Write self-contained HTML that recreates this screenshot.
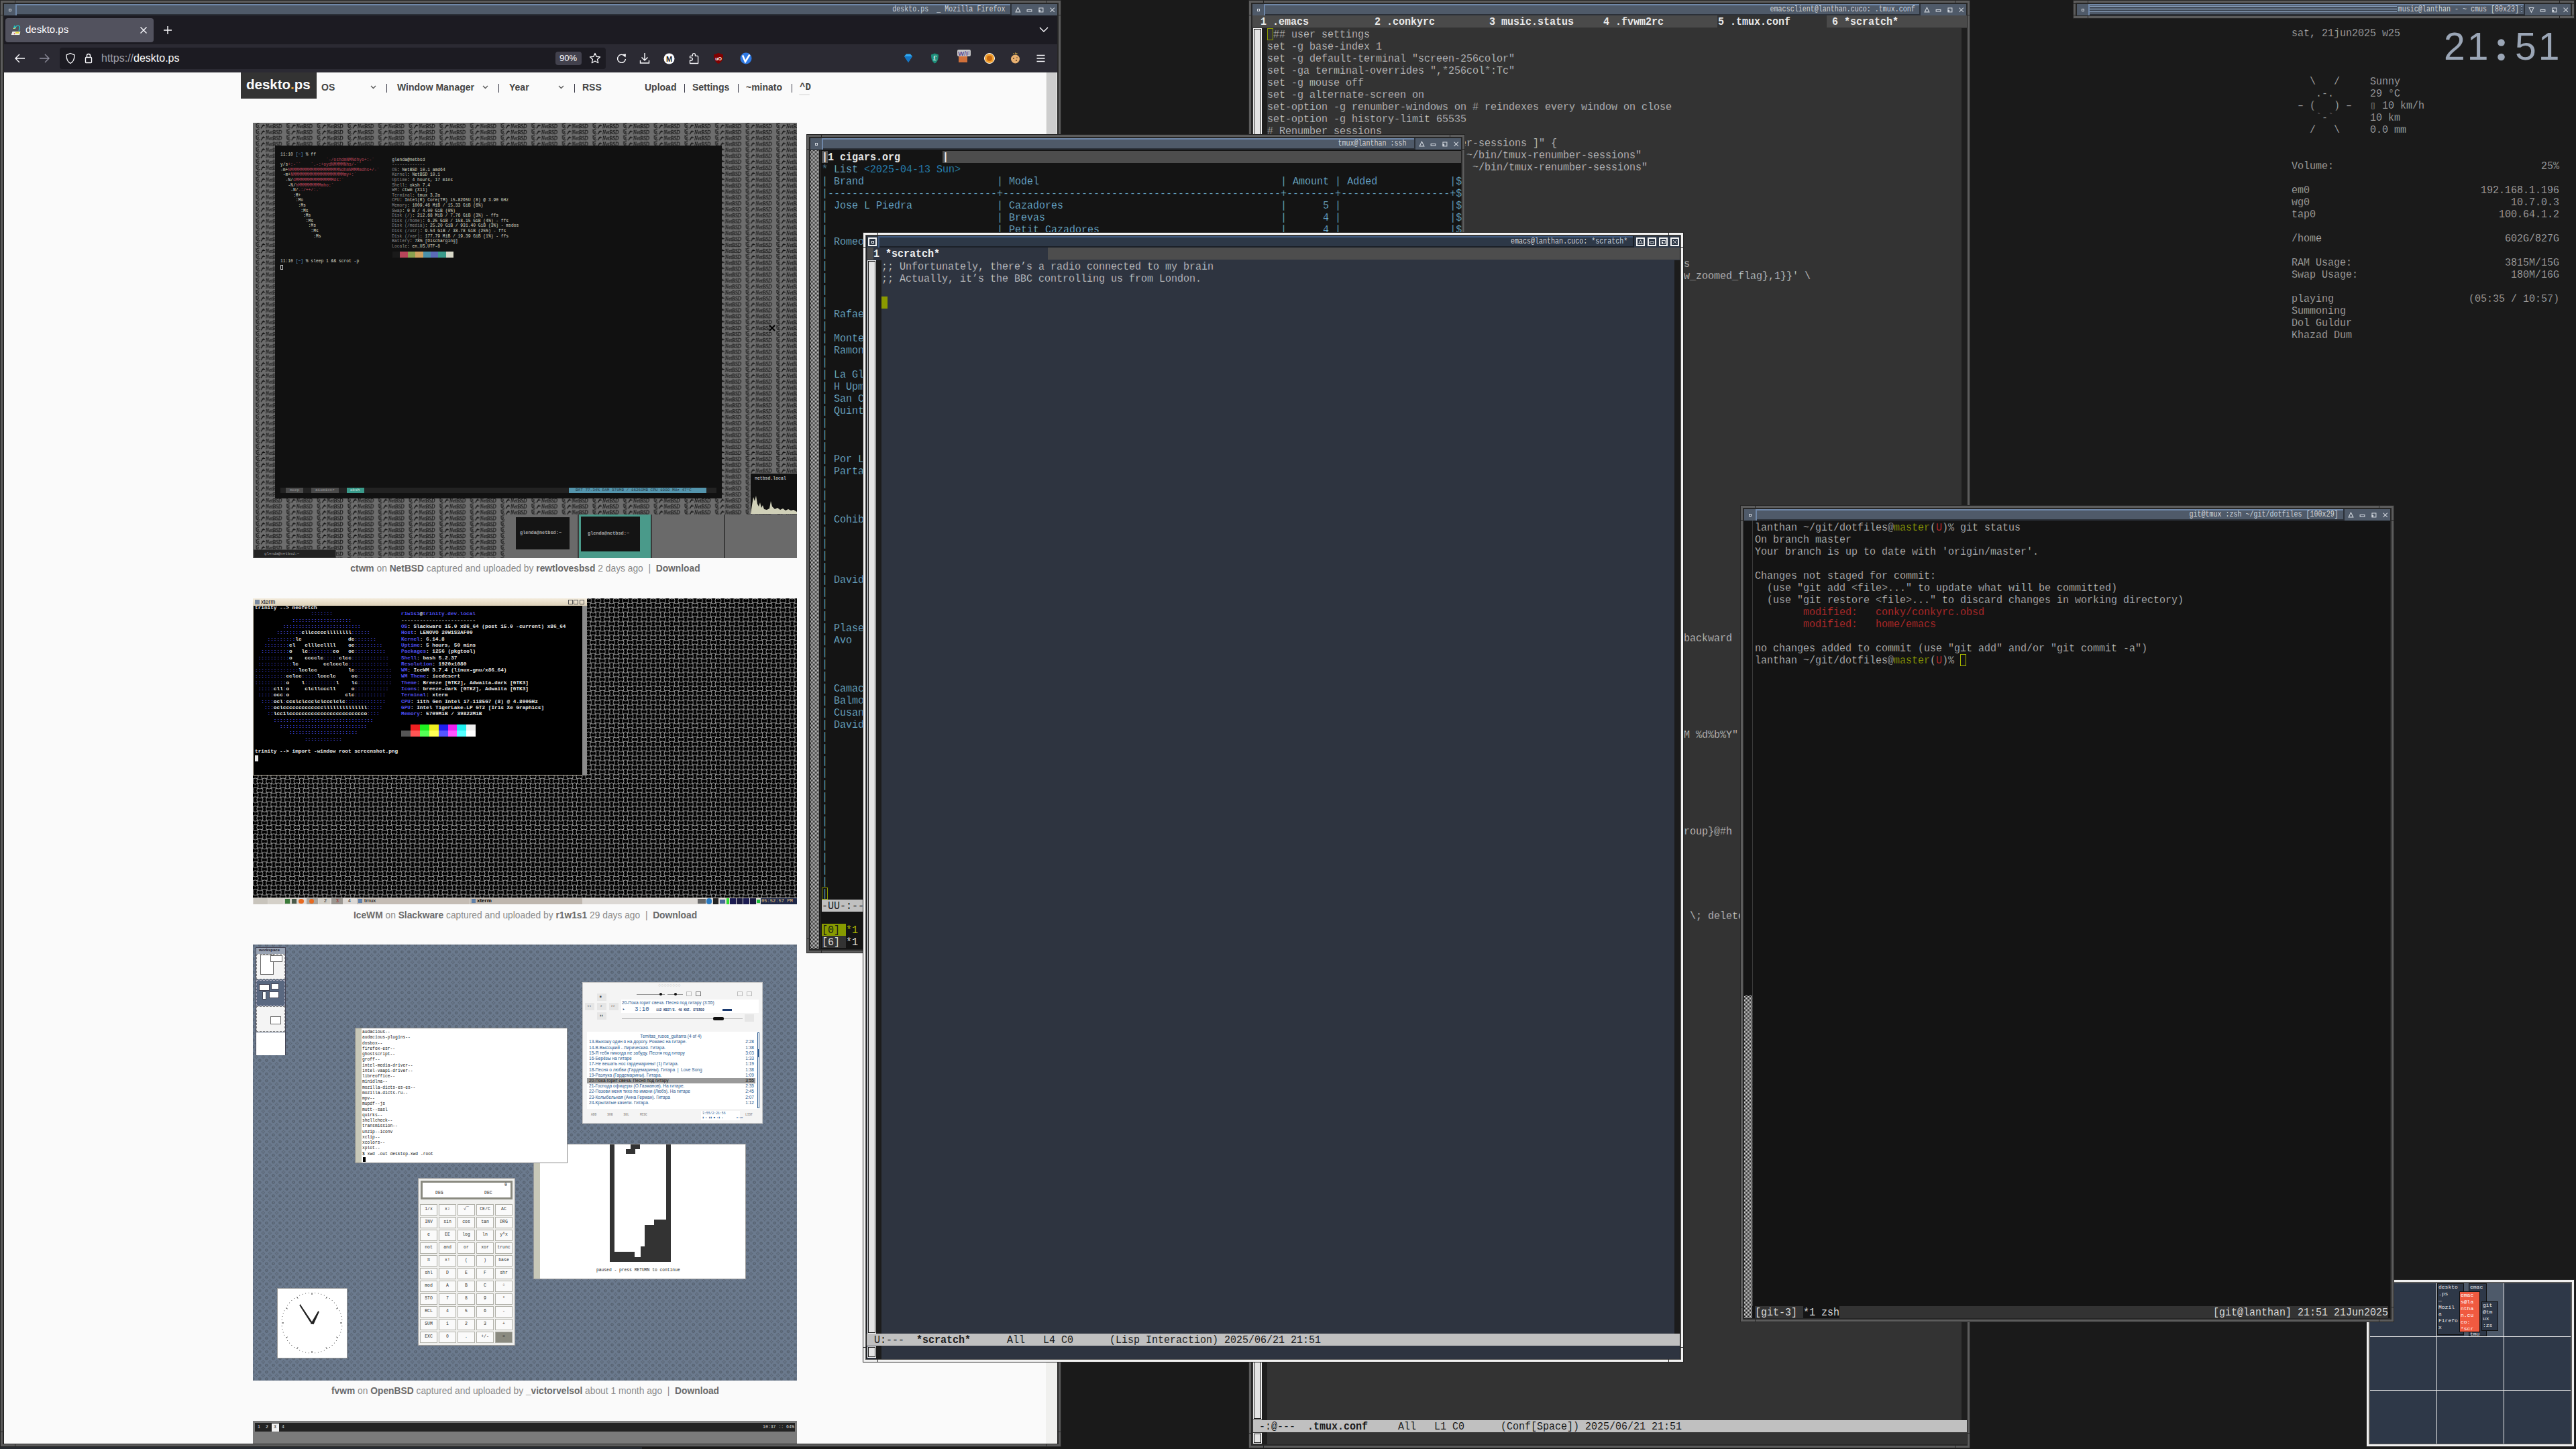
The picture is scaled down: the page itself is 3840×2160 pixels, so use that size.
<!DOCTYPE html><html><head><meta charset="utf-8"><style>
*{margin:0;padding:0;box-sizing:border-box}
html,body{width:3840px;height:2160px;overflow:hidden;background:#1a1a1a}
body{position:relative;font-family:"Liberation Sans",sans-serif}
div,svg{position:absolute}
.m{font-family:"Liberation Mono",monospace;font-size:16px;line-height:18px;white-space:pre;transform:scaleX(0.9375);transform-origin:0 0}
.wt{font-family:"Liberation Mono",monospace;font-size:13px;line-height:16px;white-space:pre;color:#d2d6dc;transform:scaleX(0.77);transform-origin:100% 0}
.ffui{font-family:"Liberation Sans",sans-serif;white-space:pre}
</style></head><body><div class="m" style="left:3416px;top:41px;color:#c8c8c8;-webkit-text-stroke:0.4px #1a1a1a">sat, 21jun2025 w25</div><div style="left:3643px;top:34px;font-family:'Liberation Sans',sans-serif;font-size:57px;line-height:70px;color:#9ba6b6;letter-spacing:3px;white-space:pre">21</div><svg style="left:3720px;top:55px" width="18" height="38"><circle cx="8.5" cy="8.5" r="5.3" fill="#9ba6b6"/><circle cx="8.5" cy="30" r="5.3" fill="#9ba6b6"/></svg><div style="left:3749px;top:34px;font-family:'Liberation Sans',sans-serif;font-size:57px;line-height:70px;color:#9ba6b6;letter-spacing:3px;white-space:pre">51</div><div class="m" style="left:3416px;top:113px;color:#c8c8c8;-webkit-text-stroke:0.4px #1a1a1a">   \   /     Sunny</div><div class="m" style="left:3416px;top:131px;color:#c8c8c8;-webkit-text-stroke:0.4px #1a1a1a">    .-.      29 °C</div><div class="m" style="left:3416px;top:149px;color:#c8c8c8;-webkit-text-stroke:0.4px #1a1a1a"> – (   ) –   ▯ 10 km/h</div><div class="m" style="left:3416px;top:167px;color:#c8c8c8;-webkit-text-stroke:0.4px #1a1a1a">    `-`      10 km</div><div class="m" style="left:3416px;top:185px;color:#c8c8c8;-webkit-text-stroke:0.4px #1a1a1a">   /   \     0.0 mm</div><div class="m" style="left:3416px;top:239px;color:#c8c8c8;-webkit-text-stroke:0.4px #1a1a1a">Volume:</div><div class="m" style="left:3788px;top:239px;color:#c8c8c8;-webkit-text-stroke:0.4px #1a1a1a">25%</div><div class="m" style="left:3416px;top:275px;color:#c8c8c8;-webkit-text-stroke:0.4px #1a1a1a">em0</div><div class="m" style="left:3698px;top:275px;color:#c8c8c8;-webkit-text-stroke:0.4px #1a1a1a">192.168.1.196</div><div class="m" style="left:3416px;top:293px;color:#c8c8c8;-webkit-text-stroke:0.4px #1a1a1a">wg0</div><div class="m" style="left:3743px;top:293px;color:#c8c8c8;-webkit-text-stroke:0.4px #1a1a1a">10.7.0.3</div><div class="m" style="left:3416px;top:311px;color:#c8c8c8;-webkit-text-stroke:0.4px #1a1a1a">tap0</div><div class="m" style="left:3725px;top:311px;color:#c8c8c8;-webkit-text-stroke:0.4px #1a1a1a">100.64.1.2</div><div class="m" style="left:3416px;top:347px;color:#c8c8c8;-webkit-text-stroke:0.4px #1a1a1a">/home</div><div class="m" style="left:3734px;top:347px;color:#c8c8c8;-webkit-text-stroke:0.4px #1a1a1a">602G/827G</div><div class="m" style="left:3416px;top:383px;color:#c8c8c8;-webkit-text-stroke:0.4px #1a1a1a">RAM Usage:</div><div class="m" style="left:3734px;top:383px;color:#c8c8c8;-webkit-text-stroke:0.4px #1a1a1a">3815M/15G</div><div class="m" style="left:3416px;top:401px;color:#c8c8c8;-webkit-text-stroke:0.4px #1a1a1a">Swap Usage:</div><div class="m" style="left:3743px;top:401px;color:#c8c8c8;-webkit-text-stroke:0.4px #1a1a1a">180M/16G</div><div class="m" style="left:3416px;top:437px;color:#c8c8c8;-webkit-text-stroke:0.4px #1a1a1a">playing</div><div class="m" style="left:3680px;top:437px;color:#c8c8c8;-webkit-text-stroke:0.4px #1a1a1a">(05:35 / 10:57)</div><div class="m" style="left:3416px;top:455px;color:#c8c8c8;-webkit-text-stroke:0.4px #1a1a1a">Summoning</div><div class="m" style="left:3416px;top:473px;color:#c8c8c8;-webkit-text-stroke:0.4px #1a1a1a">Dol Guldur</div><div class="m" style="left:3416px;top:491px;color:#c8c8c8;-webkit-text-stroke:0.4px #1a1a1a">Khazad Dum</div><div style="left:0px;top:2157px;width:957px;height:3px;background:#282c32;"></div><div style="left:0px;top:0px;width:1582px;height:2157px;background:#262626;"></div><div style="left:1px;top:1px;width:1580px;height:2155px;background:#5c5c5c;"></div><div style="left:4px;top:4px;width:1574px;height:2149px;background:#262626;"></div><div style="left:22px;top:0px;width:1px;height:6px;background:#262626;"></div><div style="left:0px;top:22px;width:6px;height:1px;background:#262626;"></div><div style="left:1559px;top:0px;width:1px;height:6px;background:#262626;"></div><div style="left:1576px;top:22px;width:6px;height:1px;background:#262626;"></div><div style="left:22px;top:2151px;width:1px;height:6px;background:#262626;"></div><div style="left:0px;top:2134px;width:6px;height:1px;background:#262626;"></div><div style="left:1559px;top:2151px;width:1px;height:6px;background:#262626;"></div><div style="left:1576px;top:2134px;width:6px;height:1px;background:#262626;"></div><div style="left:6px;top:6px;width:17px;height:17px;background:#4f5a69;"></div><div style="left:13px;top:13px;width:4px;height:4px;background:transparent;border:1px solid #d0d5dc"></div><div style="left:23px;top:6px;width:1483px;height:17px;background:#4f5a69;box-shadow:inset 2px 2px 0 #6f87a8, inset 0 -2px 0 #2b3038"></div><div style="left:1506px;top:6px;width:2px;height:17px;background:#2b3038;"></div><div class="wt" style="right:2342px;top:6px">deskto.ps  _ Mozilla Firefox</div><div style="left:1508px;top:6px;width:68px;height:17px;background:#4f5a69;"></div><svg style="left:1512px;top:9px" width="11" height="11" viewBox="0 0 13 13"><path d="M6.5 2.5 L2.5 10.5 L10.5 10.5 Z" fill="none" stroke="#d0d5dc" stroke-width="1.3"/></svg><svg style="left:1529px;top:9px" width="11" height="11" viewBox="0 0 13 13"><rect x="2.5" y="6.5" width="8" height="3" fill="none" stroke="#d0d5dc" stroke-width="1.3"/></svg><svg style="left:1546px;top:9px" width="11" height="11" viewBox="0 0 13 13"><rect x="3.5" y="3.5" width="7" height="7" fill="none" stroke="#d0d5dc" stroke-width="1.3"/><rect x="3" y="7" width="3" height="3" fill="#d0d5dc"/></svg><svg style="left:1563px;top:9px" width="11" height="11" viewBox="0 0 13 13"><path d="M3 3 L10.5 10.5 M10.5 3 L3 10.5" stroke="#d0d5dc" stroke-width="1.2"/></svg><div style="left:6px;top:23px;width:1570px;height:43px;background:#1c1b22;"></div><div style="left:8px;top:27px;width:221px;height:36px;background:#52525e;border-radius:4px"></div><svg style="left:15px;top:37px" width="17" height="17" viewBox="0 0 17 17"><path d="M3.2 9.6 L16 9.6 L14.6 15.6 L1 15.6 Z" fill="#ececec" stroke="#3a3a3a" stroke-width="0.7"/><rect x="8" y="10.6" width="5.5" height="2.4" fill="#e8e040"/><circle cx="6.5" cy="13.3" r="0.9" fill="#d03030"/><path d="M8.5 2.6 C11 0.6 14.5 1 14.5 4 L13.2 9" fill="none" stroke="#20c0c0" stroke-width="1.4"/><path d="M6.4 0.6 L9.4 4.6 L4.6 5.8 Z" fill="#20c0c0"/><path d="M5 5.6 L9 4.6" stroke="#f0f080" stroke-width="1"/></svg><div class="ffui" style="left:38px;top:34px;font-size:15px;line-height:20px;color:#fbfbfe">deskto.ps</div><svg style="left:208px;top:39px" width="12" height="12" viewBox="0 0 12 12"><path d="M1.5 1.5 L10.5 10.5 M10.5 1.5 L1.5 10.5" stroke="#fbfbfe" stroke-width="1.4"/></svg><svg style="left:243px;top:38px" width="14" height="14" viewBox="0 0 14 14"><path d="M7 1 V13 M1 7 H13" stroke="#fbfbfe" stroke-width="1.4"/></svg><svg style="left:1549px;top:40px" width="14" height="9" viewBox="0 0 14 9"><path d="M1 1 L7 7 L13 1" fill="none" stroke="#fbfbfe" stroke-width="1.4"/></svg><div style="left:6px;top:66px;width:1570px;height:42px;background:#2b2a33;"></div><div style="left:89px;top:71px;width:814px;height:32px;background:#1c1b22;border-radius:4px"></div><div class="ffui" style="left:151px;top:77px;font-size:16px;line-height:20px;color:#fbfbfe"><span style="color:#a0a0aa">https://</span>deskto.ps</div><div style="left:828px;top:77px;width:39px;height:20px;background:#42414d;border-radius:4px"></div><div class="ffui" style="left:834px;top:79px;font-size:13px;line-height:16px;color:#fbfbfe">90%</div><svg style="left:21px;top:79px" width="18" height="16" viewBox="0 0 18 16"><path d="M2 8 H16 M8 2 L2 8 L8 14" fill="none" stroke="#fbfbfe" stroke-width="1.4"/></svg><svg style="left:57px;top:79px" width="18" height="16" viewBox="0 0 18 16"><path d="M2 8 H16 M10 2 L16 8 L10 14" fill="none" stroke="#8f8f9d" stroke-width="1.4"/></svg><svg style="left:97px;top:78px" width="16" height="18" viewBox="0 0 16 18"><path d="M8 1.5 L14 4 C14 11 12 14.5 8 16.5 C4 14.5 2 11 2 4 Z" fill="none" stroke="#fbfbfe" stroke-width="1.3"/></svg><svg style="left:126px;top:78px" width="12" height="17" viewBox="0 0 12 17"><rect x="1.5" y="7.5" width="9" height="8" rx="1" fill="none" stroke="#fbfbfe" stroke-width="1.4"/><path d="M3.5 7.5 V5 a2.5 2.5 0 0 1 5 0 V7.5" fill="none" stroke="#fbfbfe" stroke-width="1.4"/></svg><svg style="left:878px;top:78px" width="18" height="18" viewBox="0 0 18 18"><path d="M9 1.5 L11.2 6.3 L16.5 6.9 L12.5 10.4 L13.7 15.7 L9 13 L4.3 15.7 L5.5 10.4 L1.5 6.9 L6.8 6.3 Z" fill="none" stroke="#fbfbfe" stroke-width="1.3" stroke-linejoin="round"/></svg><svg style="left:918px;top:79px" width="17" height="17" viewBox="0 0 17 17"><path d="M13.5 5 A6 6 0 1 0 14.5 9" fill="none" stroke="#fbfbfe" stroke-width="1.4"/><path d="M10 2 L15 1.5 L14.5 6.5 Z" fill="#fbfbfe"/></svg><svg style="left:953px;top:78px" width="16" height="18" viewBox="0 0 16 18"><path d="M8 1 V12 M3.5 7.5 L8 12 L12.5 7.5 M1.5 12 V16 H14.5 V12" fill="none" stroke="#fbfbfe" stroke-width="1.4"/></svg><svg style="left:989px;top:79px" width="17" height="17" viewBox="0 0 17 17"><circle cx="8.5" cy="8.5" r="8" fill="#fbfbfe"/><text x="8.5" y="12.6" font-family="Liberation Sans" font-weight="bold" font-size="11" text-anchor="middle" fill="#1c1b22">M</text></svg><svg style="left:1026px;top:78px" width="17" height="18" viewBox="0 0 17 18"><path d="M2.5 16.5 V12 H4.5 A1.9 1.9 0 0 0 4.5 8.2 H2.5 V6.5 Q2.5 5.3 3.7 5.3 H6.4 V3.6 A2 2 0 0 1 10.4 3.6 V5.3 H13.4 Q14.6 5.3 14.6 6.5 V16.5 Z" fill="none" stroke="#fbfbfe" stroke-width="1.3" stroke-linejoin="round"/></svg><svg style="left:1063px;top:78px" width="16" height="18" viewBox="0 0 16 18"><path d="M8 1 L15 3.5 C15 11 12.5 15 8 17 C3.5 15 1 11 1 3.5 Z" fill="#800000"/><text x="8" y="11.5" font-family="Liberation Sans" font-weight="bold" font-size="7" text-anchor="middle" fill="#fff">uO</text></svg><svg style="left:1103px;top:78px" width="18" height="18" viewBox="0 0 18 18"><circle cx="9" cy="9" r="8.5" fill="#2f7ae5"/><path d="M4 4.5 L8 14 L14.5 3.5" fill="none" stroke="#fff" stroke-width="2.6"/></svg><svg style="left:1347px;top:79px" width="14" height="15" viewBox="0 0 14 15"><path d="M1 5 L4 1.5 H10 L13 5 L7 14 Z" fill="#31a8f0"/><path d="M1 5 H13 L7 14 Z" fill="#1273c4"/></svg><svg style="left:1387px;top:79px" width="13" height="16" viewBox="0 0 13 16"><path d="M6.5 0.5 L12 2.5 C12 10 10 13.5 6.5 15.5 C3 13.5 1 10 1 2.5 Z" fill="#1e8f7a"/><text x="6.5" y="11" font-family="Liberation Serif" font-style="italic" font-weight="bold" font-size="10" text-anchor="middle" fill="#fff">£</text></svg><svg style="left:1427px;top:73px" width="21" height="21" viewBox="0 0 21 21"><rect x="0" y="1" width="20" height="10" rx="2" fill="#c8c8c8"/><text x="10" y="10" font-family="Liberation Sans" font-weight="bold" font-size="9.5" text-anchor="middle" fill="#5a4a90">W/F</text><rect x="2" y="11" width="13" height="9" fill="#d0703a"/></svg><svg style="left:1467px;top:79px" width="16" height="16" viewBox="0 0 16 16"><circle cx="8" cy="8" r="7.5" fill="#f0a030" stroke="#fff" stroke-width="1"/><circle cx="8" cy="8" r="4" fill="#c86a10"/></svg><svg style="left:1506px;top:78px" width="15" height="17" viewBox="0 0 15 17"><circle cx="7.5" cy="10" r="6.5" fill="#e8b070"/><circle cx="5" cy="9" r="1" fill="#5a3a20"/><circle cx="9" cy="12" r="1" fill="#5a3a20"/><circle cx="10" cy="8" r="0.8" fill="#5a3a20"/><path d="M5 1 L5.5 3 M7.5 0.5 V2.5 M10 1 L9.5 3" stroke="#f0c040" stroke-width="1"/></svg><svg style="left:1545px;top:81px" width="13" height="12" viewBox="0 0 13 12"><path d="M0.5 1.5 H12.5 M0.5 6 H12.5 M0.5 10.5 H12.5" stroke="#fbfbfe" stroke-width="1.3"/></svg><div style="left:6px;top:108px;width:1570px;height:2044px;background:#fafafa;"></div><div style="left:1559px;top:108px;width:17px;height:2044px;background:#f0f0ee;"></div><div style="left:1560px;top:108px;width:15px;height:330px;background:#cdcdcd;"></div><div style="left:359px;top:108px;width:113px;height:39px;background:#333333;"></div><div class="ffui" style="left:367px;top:113px;font-size:20.5px;line-height:26px;font-weight:bold;color:#fafafa">deskto<span style="color:#e9a43c">.</span>ps</div><div class="ffui" style="left:479px;top:121px;font-size:14px;line-height:18px;font-weight:bold;color:#454545;">OS</div><svg style="left:552px;top:127px" width="9" height="6" viewBox="0 0 9 6"><path d="M1 1 L4.5 4.5 L8 1" fill="none" stroke="#555" stroke-width="1.3"/></svg><div style="left:576px;top:125px;width:1px;height:13px;background:#3a3a48;"></div><div class="ffui" style="left:592px;top:121px;font-size:14px;line-height:18px;font-weight:bold;color:#454545;">Window Manager</div><svg style="left:719px;top:127px" width="9" height="6" viewBox="0 0 9 6"><path d="M1 1 L4.5 4.5 L8 1" fill="none" stroke="#555" stroke-width="1.3"/></svg><div style="left:743px;top:125px;width:1px;height:13px;background:#3a3a48;"></div><div class="ffui" style="left:759px;top:121px;font-size:14px;line-height:18px;font-weight:bold;color:#454545;">Year</div><svg style="left:832px;top:127px" width="9" height="6" viewBox="0 0 9 6"><path d="M1 1 L4.5 4.5 L8 1" fill="none" stroke="#555" stroke-width="1.3"/></svg><div style="left:856px;top:125px;width:1px;height:13px;background:#3a3a48;"></div><div class="ffui" style="left:868px;top:121px;font-size:14px;line-height:18px;font-weight:bold;color:#454545;">RSS</div><div class="ffui" style="left:961px;top:121px;font-size:14px;line-height:18px;font-weight:bold;color:#454545;">Upload</div><div style="left:1020px;top:125px;width:1px;height:13px;background:#3a3a48;"></div><div class="ffui" style="left:1032px;top:121px;font-size:14px;line-height:18px;font-weight:bold;color:#454545;">Settings</div><div style="left:1100px;top:125px;width:1px;height:13px;background:#3a3a48;"></div><div class="ffui" style="left:1112px;top:121px;font-size:14px;line-height:18px;font-weight:bold;color:#454545;">~minato</div><div style="left:1180px;top:125px;width:1px;height:13px;background:#3a3a48;"></div><div class="ffui" style="left:1192px;top:121px;font-size:14px;line-height:18px;font-weight:bold;color:#454545;font-family:'Liberation Mono',monospace;">^D</div><div style="left:1191px;top:140px;width:16px;height:2px;background:#e6e6e6;border-radius:1px"></div><div style="left:377px;top:183px;width:811px;height:649px;overflow:hidden"><svg style="left:0;top:0" width="811" height="649"><defs><pattern id="nb" x="3" y="0.1" width="45.65" height="8.855" patternUnits="userSpaceOnUse"><path d="M6.5 1.2 A3.4 3.4 0 1 0 7.2 7.2 M2.5 2.5 L1.2 1.5 M3.5 6.5 L5.5 5.2" fill="none" stroke="#1a1a1a" stroke-width="1.1"/><circle cx="4.8" cy="4.2" r="1.2" fill="#333"/><path d="M9 8.3 L13 2.5 M10.5 4.5 C11.5 3.3 13.5 5.5 15 4" fill="none" stroke="#0e0e0e" stroke-width="1.2"/><text x="16" y="7.4" font-family="Liberation Serif" font-style="italic" font-size="9" fill="#161616" stroke="#161616" stroke-width="0.3" textLength="24" lengthAdjust="spacingAndGlyphs">NetBSD</text></pattern></defs><rect width="811" height="649" fill="#6d6d6d"/><rect width="811" height="649" fill="url(#nb)"/></svg><div style="left:33px;top:34px;width:666px;height:526px;background:#111111;"></div><div style="left:41px;top:44px;font-family:'Liberation Mono',monospace;font-size:6.3px;line-height:7.59px;white-space:pre;color:#cfcfc0;"><span style="color:#dcdcc8;">11:10 </span><span style="color:#5a9ac8;">[~]</span><span style="color:#dcdcc8;"> % ff</span>
                  <span style="color:#b8455a;">`-/oshdmNMNdhyo+:-`</span>       <span style="color:#dcdcc8;">glenda</span><span style="color:#dcdcc8;">@</span><span style="color:#dcdcc8;">netbsd</span>
<span style="color:#dcdcc8;">y/s</span><span style="color:#b8455a;">+:-``    `.-:+oydNMMMMNhs/-``</span>            <span style="color:#8a8a8a;">-------------</span>
<span style="color:#dcdcc8;">-m+</span><span style="color:#b8455a;">NMMMMMMMMMMMMMMMMMMMNdhmNMMMmdhs+/-`</span>     <span style="color:#8a8a8a;">OS</span><span style="color:#dcdcc8;">: NetBSD 10.1 amd64</span>
 <span style="color:#dcdcc8;">-m+</span><span style="color:#b8455a;">NMMMMMMMMMMMMMMMMMMMMmy+:`</span>              <span style="color:#8a8a8a;">Kernel</span><span style="color:#dcdcc8;">: NetBSD 10.1</span>
  <span style="color:#dcdcc8;">-N/</span><span style="color:#b8455a;">dMMMMMMMMMMMMMMMds:`</span>                   <span style="color:#8a8a8a;">Uptime</span><span style="color:#dcdcc8;">: 4 hours, 17 mins</span>
   <span style="color:#dcdcc8;">-N/</span><span style="color:#b8455a;">hMMMMMMMMMmho:`</span>                       <span style="color:#8a8a8a;">Shell</span><span style="color:#dcdcc8;">: oksh 7.4</span>
    <span style="color:#dcdcc8;">-N/</span><span style="color:#b8455a;">-:/++/:.`</span>                            <span style="color:#8a8a8a;">WM</span><span style="color:#dcdcc8;">: ctwm (X11)</span>
     <span style="color:#dcdcc8;">:M+</span><span style="color:#b8455a;"></span>                                    <span style="color:#8a8a8a;">Terminal</span><span style="color:#dcdcc8;">: tmux 3.2a</span>
      <span style="color:#dcdcc8;">:Mo</span><span style="color:#b8455a;"></span>                                   <span style="color:#8a8a8a;">CPU</span><span style="color:#dcdcc8;">: Intel(R) Core(TM) i5-8265U (8) @ 3.90 GHz</span>
       <span style="color:#dcdcc8;">:Ms</span><span style="color:#b8455a;"></span>                                  <span style="color:#8a8a8a;">Memory</span><span style="color:#dcdcc8;">: 1009.46 MiB / 15.33 GiB (6%)</span>
        <span style="color:#dcdcc8;">:Ms</span><span style="color:#b8455a;"></span>                                 <span style="color:#8a8a8a;">Swap</span><span style="color:#dcdcc8;">: 0 B / 4.00 GiB (0%)</span>
         <span style="color:#dcdcc8;">:Ms</span><span style="color:#b8455a;"></span>                                <span style="color:#8a8a8a;">Disk (/)</span><span style="color:#dcdcc8;">: 212.68 MiB / 7.76 GiB (3%) - ffs</span>
          <span style="color:#dcdcc8;">:Ms</span><span style="color:#b8455a;"></span>                               <span style="color:#8a8a8a;">Disk (/home)</span><span style="color:#dcdcc8;">: 6.25 GiB / 158.15 GiB (4%) - ffs</span>
           <span style="color:#dcdcc8;">:Ms</span><span style="color:#b8455a;"></span>                              <span style="color:#8a8a8a;">Disk (/media)</span><span style="color:#dcdcc8;">: 25.20 GiB / 931.40 GiB (3%) - msdos</span>
            <span style="color:#dcdcc8;">:Ms</span><span style="color:#b8455a;"></span>                             <span style="color:#8a8a8a;">Disk (/usr)</span><span style="color:#dcdcc8;">: 9.54 GiB / 38.78 GiB (25%) - ffs</span>
             <span style="color:#dcdcc8;">:Ms</span><span style="color:#b8455a;"></span>                            <span style="color:#8a8a8a;">Disk (/var)</span><span style="color:#dcdcc8;">: 177.79 MiB / 19.39 GiB (1%) - ffs</span>
                                            <span style="color:#8a8a8a;">Battery</span><span style="color:#dcdcc8;">: 78% [Discharging]</span>
                                            <span style="color:#8a8a8a;">Locale</span><span style="color:#dcdcc8;">: en_US.UTF-8</span>
                                            </div><div style="left:208.0px;top:192px;width:11.4px;height:9px;background:#1a1a1a;"></div><div style="left:219.4px;top:192px;width:11.4px;height:9px;background:#b8455a;"></div><div style="left:230.8px;top:192px;width:11.4px;height:9px;background:#8aa050;"></div><div style="left:242.2px;top:192px;width:11.4px;height:9px;background:#d0a060;"></div><div style="left:253.6px;top:192px;width:11.4px;height:9px;background:#4a90a8;"></div><div style="left:265.0px;top:192px;width:11.4px;height:9px;background:#5a6ab8;"></div><div style="left:276.4px;top:192px;width:11.4px;height:9px;background:#3a9a8a;"></div><div style="left:287.8px;top:192px;width:11.4px;height:9px;background:#d8d8c8;"></div><div style="left:41px;top:203.39px;font-family:'Liberation Mono',monospace;font-size:6.3px;line-height:7.59px;white-space:pre;color:#cfcfc0;"><span style="color:#dcdcc8;">11:10 </span><span style="color:#5a9ac8;">[~]</span><span style="color:#dcdcc8;"> % sleep 1 &amp;&amp; scrot -p</span></div><div style="left:41px;top:212px;width:4px;height:7px;background:transparent;border:1px solid #ccc"></div><div style="left:41px;top:544px;width:650px;height:8px;background:#222222;"></div><div style="left:49px;top:544px;width:26px;height:8px;background:#4a4a4a;"></div><div style="left:55px;top:543px;font-family:'Liberation Mono',monospace;font-size:6px;line-height:9px;white-space:pre;color:#9a9a9a;">mocp</div><div style="left:87px;top:544px;width:41px;height:8px;background:#4a4a4a;"></div><div style="left:93px;top:543px;font-family:'Liberation Mono',monospace;font-size:6px;line-height:9px;white-space:pre;color:#9a9a9a;">aiomixer</div><div style="left:140px;top:544px;width:26px;height:8px;background:#3a9a8a;"></div><div style="left:145px;top:543px;font-family:'Liberation Mono',monospace;font-size:6px;line-height:9px;white-space:pre;color:#d8f0e8;">oksh</div><div style="left:471px;top:544px;width:205px;height:8px;background:#5495ad;"></div><div style="left:481px;top:543px;font-family:'Liberation Mono',monospace;font-size:6px;line-height:9px;white-space:pre;color:#1e3440;">BAT 77.34% RAM 978MB / 16260MB CPU 1000 MHz 47°C</div><div style="left:742px;top:523px;width:69px;height:60px;background:#111111;"></div><div style="left:748px;top:526px;font-family:'Liberation Mono',monospace;font-size:6.5px;line-height:9px;white-space:pre;color:#e8e8e8;">netbsd.local</div><svg style="left:742px;top:550px" width="69" height="33" viewBox="0 0 69 33"><path d="M0 33 L2 20 L4 8 L6 14 L8 6 L10 18 L12 22 L14 16 L16 24 L18 20 L20 26 L24 27 L28 25 L30 14 L32 22 L36 26 L40 24 L44 27 L48 25 L52 28 L56 26 L60 28 L64 27 L69 30 L69 33 Z" fill="#d0d0b8"/></svg><div style="left:376px;top:584px;width:435px;height:65px;background:#6a6a6a;"></div><div style="left:484px;top:584px;width:2px;height:65px;background:#3a3a3a;"></div><div style="left:593px;top:584px;width:2px;height:65px;background:#3a3a3a;"></div><div style="left:702px;top:584px;width:2px;height:65px;background:#3a3a3a;"></div><div style="left:486px;top:584px;width:107px;height:65px;background:#4a9a8a;"></div><div style="left:392px;top:588px;width:80px;height:48px;background:#141414;"></div><div style="left:489px;top:587px;width:88px;height:52px;background:#141414;"></div><div style="left:398px;top:606px;font-family:'Liberation Mono',monospace;font-size:6.9px;line-height:10px;white-space:pre;color:#a8a8a8;font-weight:bold">glenda@netbsd:~</div><div style="left:499px;top:607px;font-family:'Liberation Mono',monospace;font-size:6.9px;line-height:10px;white-space:pre;color:#a8a8a8;font-weight:bold">glenda@netbsd:~</div><div style="left:1px;top:636px;width:123px;height:13px;background:#222222;border:1px solid #444"></div><div style="left:17px;top:638px;font-family:'Liberation Mono',monospace;font-size:5.8px;line-height:9px;white-space:pre;color:#a0a0a0;">glenda@netbsd:~</div><svg style="left:768px;top:300px" width="12" height="12" viewBox="0 0 12 12"><path d="M2 2 L10 10 M10 2 L2 10" stroke="#000" stroke-width="2"/></svg></div><div class="ffui" style="left:283px;width:1000px;top:838px;text-align:center;font-size:13.8px;line-height:20px;color:#8a8a8a"><b style="color:#6a6a6a">ctwm</b> on <b style="color:#6a6a6a">NetBSD</b> captured and uploaded by <b style="color:#6a6a6a">rewtlovesbsd</b> 2 days ago &nbsp;|&nbsp; <b style="color:#6a6a6a">Download</b></div><div style="left:377px;top:892px;width:811px;height:456px;overflow:hidden;background:#000"><svg style="left:0;top:0" width="811" height="456"><defs><pattern id="wv" width="13.8" height="13.8" patternUnits="userSpaceOnUse"><path d="M0.00 0.00 Q3.45 2.20 6.90 0.00 M6.90 0.00 Q10.35 -2.20 13.80 0.00 M0.00 6.90 Q3.45 4.70 6.90 6.90 M6.90 6.90 Q10.35 9.10 13.80 6.90 M0.00 13.80 Q3.45 16.00 6.90 13.80 M6.90 13.80 Q10.35 11.60 13.80 13.80 M0.00 0.00 Q-2.20 3.45 0.00 6.90 M0.00 6.90 Q2.20 10.35 0.00 13.80 M6.90 0.00 Q9.10 3.45 6.90 6.90 M6.90 6.90 Q4.70 10.35 6.90 13.80 M13.80 0.00 Q11.60 3.45 13.80 6.90 M13.80 6.90 Q16.00 10.35 13.80 13.80" fill="none" stroke="#c4c4c4" stroke-width="0.85"/></pattern></defs><rect width="811" height="456" fill="url(#wv)"/></svg><div style="left:0px;top:0px;width:498px;height:264px;background:#000000;border:1px solid #c8c0b0"></div><div style="left:0px;top:0px;width:498px;height:11px;background:linear-gradient(#f4ecdc,#dcd0b8);"></div><div style="left:3px;top:2px;width:7px;height:7px;background:#7a8aa0;"></div><div style="left:12px;top:0px;font-family:'Liberation Mono',monospace;font-size:8.5px;line-height:11px;white-space:pre;color:#000;font-family:'Liberation Sans',sans-serif">xterm</div><div style="left:470px;top:2px;width:7px;height:7px;background:transparent;border:1px solid #555"></div><div style="left:478px;top:2px;width:7px;height:7px;background:transparent;border:1px solid #555"></div><div style="left:487px;top:2px;width:7px;height:7px;background:transparent;border:1px solid #555"></div><div style="left:491px;top:11px;width:7px;height:253px;background:#8a8a8a;"></div><div style="left:3px;top:10px;font-family:'Liberation Mono',monospace;font-size:7.73px;line-height:9.31px;white-space:pre;color:#e8e8e8;font-weight:bold"><span style="color:#e8e8e8;">trinity --&gt; neofetch</span>
                  <span style="color:#5050f0;">:</span><span style="color:#5050f0;">:</span><span style="color:#5050f0;">:</span><span style="color:#5050f0;">:</span><span style="color:#5050f0;">:</span><span style="color:#5050f0;">:</span><span style="color:#5050f0;">:</span>                      <span style="color:#5050f0;">r1w1s1</span><span style="color:#e8e8e8;">@</span><span style="color:#5050f0;">trinity.dev.local</span>
            <span style="color:#5050f0;">:</span><span style="color:#5050f0;">:</span><span style="color:#5050f0;">:</span><span style="color:#5050f0;">:</span><span style="color:#5050f0;">:</span><span style="color:#5050f0;">:</span><span style="color:#5050f0;">:</span><span style="color:#5050f0;">:</span><span style="color:#5050f0;">:</span><span style="color:#5050f0;">:</span><span style="color:#5050f0;">:</span><span style="color:#5050f0;">:</span><span style="color:#5050f0;">:</span><span style="color:#5050f0;">:</span><span style="color:#5050f0;">:</span><span style="color:#5050f0;">:</span><span style="color:#5050f0;">:</span><span style="color:#5050f0;">:</span><span style="color:#5050f0;">:</span>                <span style="color:#e8e8e8;">------------------------</span>
         <span style="color:#5050f0;">:</span><span style="color:#5050f0;">:</span><span style="color:#5050f0;">:</span><span style="color:#5050f0;">:</span><span style="color:#5050f0;">:</span><span style="color:#5050f0;">:</span><span style="color:#5050f0;">:</span><span style="color:#5050f0;">:</span><span style="color:#5050f0;">:</span><span style="color:#5050f0;">:</span><span style="color:#5050f0;">:</span><span style="color:#5050f0;">:</span><span style="color:#5050f0;">:</span><span style="color:#5050f0;">:</span><span style="color:#5050f0;">:</span><span style="color:#5050f0;">:</span><span style="color:#5050f0;">:</span><span style="color:#5050f0;">:</span><span style="color:#5050f0;">:</span><span style="color:#5050f0;">:</span><span style="color:#5050f0;">:</span><span style="color:#5050f0;">:</span><span style="color:#5050f0;">:</span><span style="color:#5050f0;">:</span><span style="color:#5050f0;">:</span>             <span style="color:#5050f0;">OS</span><span style="color:#e8e8e8;">: Slackware 15.0 x86_64 (post 15.0 -current) x86_64</span>
       <span style="color:#5050f0;">:</span><span style="color:#5050f0;">:</span><span style="color:#5050f0;">:</span><span style="color:#5050f0;">:</span><span style="color:#5050f0;">:</span><span style="color:#5050f0;">:</span><span style="color:#5050f0;">:</span><span style="color:#5050f0;">:</span><span style="color:#e8e8e8;">c</span><span style="color:#e8e8e8;">l</span><span style="color:#e8e8e8;">l</span><span style="color:#e8e8e8;">c</span><span style="color:#e8e8e8;">c</span><span style="color:#e8e8e8;">c</span><span style="color:#e8e8e8;">c</span><span style="color:#e8e8e8;">c</span><span style="color:#e8e8e8;">l</span><span style="color:#e8e8e8;">l</span><span style="color:#e8e8e8;">l</span><span style="color:#e8e8e8;">l</span><span style="color:#e8e8e8;">l</span><span style="color:#e8e8e8;">l</span><span style="color:#e8e8e8;">l</span><span style="color:#e8e8e8;">l</span><span style="color:#5050f0;">:</span><span style="color:#5050f0;">:</span><span style="color:#5050f0;">:</span><span style="color:#5050f0;">:</span><span style="color:#5050f0;">:</span><span style="color:#5050f0;">:</span>          <span style="color:#5050f0;">Host</span><span style="color:#e8e8e8;">: LENOVO 20W1S3AF00</span>
    <span style="color:#5050f0;">:</span><span style="color:#5050f0;">:</span><span style="color:#5050f0;">:</span><span style="color:#5050f0;">:</span><span style="color:#5050f0;">:</span><span style="color:#5050f0;">:</span><span style="color:#5050f0;">:</span><span style="color:#5050f0;">:</span><span style="color:#5050f0;">:</span><span style="color:#e8e8e8;">l</span><span style="color:#e8e8e8;">c</span>               <span style="color:#e8e8e8;">d</span><span style="color:#e8e8e8;">c</span><span style="color:#5050f0;">:</span><span style="color:#5050f0;">:</span><span style="color:#5050f0;">:</span><span style="color:#5050f0;">:</span><span style="color:#5050f0;">:</span><span style="color:#5050f0;">:</span><span style="color:#5050f0;">:</span>        <span style="color:#5050f0;">Kernel</span><span style="color:#e8e8e8;">: 6.14.8</span>
   <span style="color:#5050f0;">:</span><span style="color:#5050f0;">:</span><span style="color:#5050f0;">:</span><span style="color:#5050f0;">:</span><span style="color:#5050f0;">:</span><span style="color:#5050f0;">:</span><span style="color:#5050f0;">:</span><span style="color:#5050f0;">:</span><span style="color:#e8e8e8;">c</span><span style="color:#e8e8e8;">l</span>   <span style="color:#e8e8e8;">c</span><span style="color:#e8e8e8;">l</span><span style="color:#e8e8e8;">l</span><span style="color:#e8e8e8;">l</span><span style="color:#e8e8e8;">c</span><span style="color:#e8e8e8;">c</span><span style="color:#e8e8e8;">l</span><span style="color:#e8e8e8;">l</span><span style="color:#e8e8e8;">l</span><span style="color:#e8e8e8;">l</span>    <span style="color:#e8e8e8;">o</span><span style="color:#e8e8e8;">c</span><span style="color:#5050f0;">:</span><span style="color:#5050f0;">:</span><span style="color:#5050f0;">:</span><span style="color:#5050f0;">:</span><span style="color:#5050f0;">:</span><span style="color:#5050f0;">:</span><span style="color:#5050f0;">:</span><span style="color:#5050f0;">:</span><span style="color:#5050f0;">:</span>      <span style="color:#5050f0;">Uptime</span><span style="color:#e8e8e8;">: 5 hours, 50 mins</span>
  <span style="color:#5050f0;">:</span><span style="color:#5050f0;">:</span><span style="color:#5050f0;">:</span><span style="color:#5050f0;">:</span><span style="color:#5050f0;">:</span><span style="color:#5050f0;">:</span><span style="color:#5050f0;">:</span><span style="color:#5050f0;">:</span><span style="color:#5050f0;">:</span><span style="color:#e8e8e8;">o</span>   <span style="color:#e8e8e8;">l</span><span style="color:#e8e8e8;">c</span><span style="color:#5050f0;">:</span><span style="color:#5050f0;">:</span><span style="color:#5050f0;">:</span><span style="color:#5050f0;">:</span><span style="color:#5050f0;">:</span><span style="color:#5050f0;">:</span><span style="color:#5050f0;">:</span><span style="color:#5050f0;">:</span><span style="color:#e8e8e8;">c</span><span style="color:#e8e8e8;">o</span>   <span style="color:#e8e8e8;">o</span><span style="color:#e8e8e8;">c</span><span style="color:#5050f0;">:</span><span style="color:#5050f0;">:</span><span style="color:#5050f0;">:</span><span style="color:#5050f0;">:</span><span style="color:#5050f0;">:</span><span style="color:#5050f0;">:</span><span style="color:#5050f0;">:</span><span style="color:#5050f0;">:</span><span style="color:#5050f0;">:</span><span style="color:#5050f0;">:</span>     <span style="color:#5050f0;">Packages</span><span style="color:#e8e8e8;">: 1256 (pkgtool)</span>
 <span style="color:#5050f0;">:</span><span style="color:#5050f0;">:</span><span style="color:#5050f0;">:</span><span style="color:#5050f0;">:</span><span style="color:#5050f0;">:</span><span style="color:#5050f0;">:</span><span style="color:#5050f0;">:</span><span style="color:#5050f0;">:</span><span style="color:#5050f0;">:</span><span style="color:#5050f0;">:</span><span style="color:#e8e8e8;">o</span>    <span style="color:#e8e8e8;">c</span><span style="color:#e8e8e8;">c</span><span style="color:#e8e8e8;">c</span><span style="color:#e8e8e8;">c</span><span style="color:#e8e8e8;">l</span><span style="color:#e8e8e8;">c</span><span style="color:#5050f0;">:</span><span style="color:#5050f0;">:</span><span style="color:#5050f0;">:</span><span style="color:#5050f0;">:</span><span style="color:#5050f0;">:</span><span style="color:#e8e8e8;">c</span><span style="color:#e8e8e8;">l</span><span style="color:#e8e8e8;">c</span><span style="color:#e8e8e8;">c</span><span style="color:#5050f0;">:</span><span style="color:#5050f0;">:</span><span style="color:#5050f0;">:</span><span style="color:#5050f0;">:</span><span style="color:#5050f0;">:</span><span style="color:#5050f0;">:</span><span style="color:#5050f0;">:</span><span style="color:#5050f0;">:</span><span style="color:#5050f0;">:</span><span style="color:#5050f0;">:</span><span style="color:#5050f0;">:</span><span style="color:#5050f0;">:</span>    <span style="color:#5050f0;">Shell</span><span style="color:#e8e8e8;">: bash 5.2.37</span>
 <span style="color:#5050f0;">:</span><span style="color:#5050f0;">:</span><span style="color:#5050f0;">:</span><span style="color:#5050f0;">:</span><span style="color:#5050f0;">:</span><span style="color:#5050f0;">:</span><span style="color:#5050f0;">:</span><span style="color:#5050f0;">:</span><span style="color:#5050f0;">:</span><span style="color:#5050f0;">:</span><span style="color:#5050f0;">:</span><span style="color:#e8e8e8;">l</span><span style="color:#e8e8e8;">c</span>        <span style="color:#e8e8e8;">c</span><span style="color:#e8e8e8;">c</span><span style="color:#e8e8e8;">l</span><span style="color:#e8e8e8;">c</span><span style="color:#e8e8e8;">c</span><span style="color:#e8e8e8;">c</span><span style="color:#e8e8e8;">l</span><span style="color:#e8e8e8;">c</span><span style="color:#5050f0;">:</span><span style="color:#5050f0;">:</span><span style="color:#5050f0;">:</span><span style="color:#5050f0;">:</span><span style="color:#5050f0;">:</span><span style="color:#5050f0;">:</span><span style="color:#5050f0;">:</span><span style="color:#5050f0;">:</span><span style="color:#5050f0;">:</span><span style="color:#5050f0;">:</span><span style="color:#5050f0;">:</span><span style="color:#5050f0;">:</span><span style="color:#5050f0;">:</span>    <span style="color:#5050f0;">Resolution</span><span style="color:#e8e8e8;">: 1920x1080</span>
<span style="color:#5050f0;">:</span><span style="color:#5050f0;">:</span><span style="color:#5050f0;">:</span><span style="color:#5050f0;">:</span><span style="color:#5050f0;">:</span><span style="color:#5050f0;">:</span><span style="color:#5050f0;">:</span><span style="color:#5050f0;">:</span><span style="color:#5050f0;">:</span><span style="color:#5050f0;">:</span><span style="color:#5050f0;">:</span><span style="color:#5050f0;">:</span><span style="color:#5050f0;">:</span><span style="color:#5050f0;">:</span><span style="color:#e8e8e8;">l</span><span style="color:#e8e8e8;">c</span><span style="color:#e8e8e8;">c</span><span style="color:#e8e8e8;">l</span><span style="color:#e8e8e8;">c</span><span style="color:#e8e8e8;">c</span>          <span style="color:#e8e8e8;">l</span><span style="color:#e8e8e8;">c</span><span style="color:#5050f0;">:</span><span style="color:#5050f0;">:</span><span style="color:#5050f0;">:</span><span style="color:#5050f0;">:</span><span style="color:#5050f0;">:</span><span style="color:#5050f0;">:</span><span style="color:#5050f0;">:</span><span style="color:#5050f0;">:</span><span style="color:#5050f0;">:</span><span style="color:#5050f0;">:</span><span style="color:#5050f0;">:</span><span style="color:#5050f0;">:</span>   <span style="color:#5050f0;">WM</span><span style="color:#e8e8e8;">: IceWM 3.7.4 (linux-gnu/x86_64)</span>
<span style="color:#5050f0;">:</span><span style="color:#5050f0;">:</span><span style="color:#5050f0;">:</span><span style="color:#5050f0;">:</span><span style="color:#5050f0;">:</span><span style="color:#5050f0;">:</span><span style="color:#5050f0;">:</span><span style="color:#5050f0;">:</span><span style="color:#5050f0;">:</span><span style="color:#5050f0;">:</span><span style="color:#e8e8e8;">c</span><span style="color:#e8e8e8;">c</span><span style="color:#e8e8e8;">l</span><span style="color:#e8e8e8;">c</span><span style="color:#e8e8e8;">c</span><span style="color:#5050f0;">:</span><span style="color:#5050f0;">:</span><span style="color:#5050f0;">:</span><span style="color:#5050f0;">:</span><span style="color:#5050f0;">:</span><span style="color:#e8e8e8;">l</span><span style="color:#e8e8e8;">c</span><span style="color:#e8e8e8;">c</span><span style="color:#e8e8e8;">c</span><span style="color:#e8e8e8;">l</span><span style="color:#e8e8e8;">c</span>     <span style="color:#e8e8e8;">o</span><span style="color:#e8e8e8;">c</span><span style="color:#5050f0;">:</span><span style="color:#5050f0;">:</span><span style="color:#5050f0;">:</span><span style="color:#5050f0;">:</span><span style="color:#5050f0;">:</span><span style="color:#5050f0;">:</span><span style="color:#5050f0;">:</span><span style="color:#5050f0;">:</span><span style="color:#5050f0;">:</span><span style="color:#5050f0;">:</span><span style="color:#5050f0;">:</span>   <span style="color:#5050f0;">WM Theme</span><span style="color:#e8e8e8;">: icedesert</span>
<span style="color:#5050f0;">:</span><span style="color:#5050f0;">:</span><span style="color:#5050f0;">:</span><span style="color:#5050f0;">:</span><span style="color:#5050f0;">:</span><span style="color:#5050f0;">:</span><span style="color:#5050f0;">:</span><span style="color:#5050f0;">:</span><span style="color:#5050f0;">:</span><span style="color:#5050f0;">:</span><span style="color:#e8e8e8;">o</span>    <span style="color:#e8e8e8;">l</span><span style="color:#5050f0;">:</span><span style="color:#5050f0;">:</span><span style="color:#5050f0;">:</span><span style="color:#5050f0;">:</span><span style="color:#5050f0;">:</span><span style="color:#5050f0;">:</span><span style="color:#5050f0;">:</span><span style="color:#5050f0;">:</span><span style="color:#5050f0;">:</span><span style="color:#5050f0;">:</span><span style="color:#e8e8e8;">l</span>    <span style="color:#e8e8e8;">l</span><span style="color:#e8e8e8;">c</span><span style="color:#5050f0;">:</span><span style="color:#5050f0;">:</span><span style="color:#5050f0;">:</span><span style="color:#5050f0;">:</span><span style="color:#5050f0;">:</span><span style="color:#5050f0;">:</span><span style="color:#5050f0;">:</span><span style="color:#5050f0;">:</span><span style="color:#5050f0;">:</span><span style="color:#5050f0;">:</span><span style="color:#5050f0;">:</span>   <span style="color:#5050f0;">Theme</span><span style="color:#e8e8e8;">: Breeze [GTK2], Adwaita-dark [GTK3]</span>
 <span style="color:#5050f0;">:</span><span style="color:#5050f0;">:</span><span style="color:#5050f0;">:</span><span style="color:#5050f0;">:</span><span style="color:#5050f0;">:</span><span style="color:#e8e8e8;">c</span><span style="color:#e8e8e8;">l</span><span style="color:#e8e8e8;">l</span><span style="color:#5050f0;">:</span><span style="color:#e8e8e8;">o</span>     <span style="color:#e8e8e8;">c</span><span style="color:#e8e8e8;">l</span><span style="color:#e8e8e8;">c</span><span style="color:#e8e8e8;">l</span><span style="color:#e8e8e8;">l</span><span style="color:#e8e8e8;">c</span><span style="color:#e8e8e8;">c</span><span style="color:#e8e8e8;">c</span><span style="color:#e8e8e8;">l</span><span style="color:#e8e8e8;">l</span>     <span style="color:#e8e8e8;">o</span><span style="color:#5050f0;">:</span><span style="color:#5050f0;">:</span><span style="color:#5050f0;">:</span><span style="color:#5050f0;">:</span><span style="color:#5050f0;">:</span><span style="color:#5050f0;">:</span><span style="color:#5050f0;">:</span><span style="color:#5050f0;">:</span><span style="color:#5050f0;">:</span><span style="color:#5050f0;">:</span><span style="color:#5050f0;">:</span>    <span style="color:#5050f0;">Icons</span><span style="color:#e8e8e8;">: breeze-dark [GTK2], Adwaita [GTK3]</span>
 <span style="color:#5050f0;">:</span><span style="color:#5050f0;">:</span><span style="color:#5050f0;">:</span><span style="color:#5050f0;">:</span><span style="color:#5050f0;">:</span><span style="color:#e8e8e8;">o</span><span style="color:#e8e8e8;">c</span><span style="color:#e8e8e8;">c</span><span style="color:#5050f0;">:</span><span style="color:#e8e8e8;">o</span>                  <span style="color:#e8e8e8;">c</span><span style="color:#e8e8e8;">l</span><span style="color:#e8e8e8;">c</span><span style="color:#5050f0;">:</span><span style="color:#5050f0;">:</span><span style="color:#5050f0;">:</span><span style="color:#5050f0;">:</span><span style="color:#5050f0;">:</span><span style="color:#5050f0;">:</span><span style="color:#5050f0;">:</span><span style="color:#5050f0;">:</span><span style="color:#5050f0;">:</span><span style="color:#5050f0;">:</span>     <span style="color:#5050f0;">Terminal</span><span style="color:#e8e8e8;">: xterm</span>
  <span style="color:#5050f0;">:</span><span style="color:#5050f0;">:</span><span style="color:#5050f0;">:</span><span style="color:#5050f0;">:</span><span style="color:#e8e8e8;">o</span><span style="color:#e8e8e8;">c</span><span style="color:#e8e8e8;">l</span><span style="color:#5050f0;">:</span><span style="color:#e8e8e8;">c</span><span style="color:#e8e8e8;">c</span><span style="color:#e8e8e8;">s</span><span style="color:#e8e8e8;">l</span><span style="color:#e8e8e8;">c</span><span style="color:#e8e8e8;">l</span><span style="color:#e8e8e8;">c</span><span style="color:#e8e8e8;">c</span><span style="color:#e8e8e8;">c</span><span style="color:#e8e8e8;">l</span><span style="color:#e8e8e8;">c</span><span style="color:#e8e8e8;">l</span><span style="color:#e8e8e8;">c</span><span style="color:#e8e8e8;">c</span><span style="color:#e8e8e8;">c</span><span style="color:#e8e8e8;">l</span><span style="color:#e8e8e8;">c</span><span style="color:#e8e8e8;">l</span><span style="color:#e8e8e8;">c</span><span style="color:#5050f0;">:</span><span style="color:#5050f0;">:</span><span style="color:#5050f0;">:</span><span style="color:#5050f0;">:</span><span style="color:#5050f0;">:</span><span style="color:#5050f0;">:</span><span style="color:#5050f0;">:</span><span style="color:#5050f0;">:</span><span style="color:#5050f0;">:</span><span style="color:#5050f0;">:</span><span style="color:#5050f0;">:</span><span style="color:#5050f0;">:</span><span style="color:#5050f0;">:</span>     <span style="color:#5050f0;">CPU</span><span style="color:#e8e8e8;">: 11th Gen Intel i7-1185G7 (8) @ 4.800GHz</span>
   <span style="color:#5050f0;">:</span><span style="color:#5050f0;">:</span><span style="color:#5050f0;">:</span><span style="color:#e8e8e8;">o</span><span style="color:#e8e8e8;">c</span><span style="color:#e8e8e8;">l</span><span style="color:#e8e8e8;">c</span><span style="color:#e8e8e8;">c</span><span style="color:#e8e8e8;">c</span><span style="color:#e8e8e8;">c</span><span style="color:#e8e8e8;">c</span><span style="color:#e8e8e8;">c</span><span style="color:#e8e8e8;">c</span><span style="color:#e8e8e8;">c</span><span style="color:#e8e8e8;">c</span><span style="color:#e8e8e8;">c</span><span style="color:#e8e8e8;">c</span><span style="color:#e8e8e8;">c</span><span style="color:#e8e8e8;">c</span><span style="color:#e8e8e8;">l</span><span style="color:#e8e8e8;">l</span><span style="color:#e8e8e8;">l</span><span style="color:#e8e8e8;">l</span><span style="color:#e8e8e8;">l</span><span style="color:#e8e8e8;">l</span><span style="color:#e8e8e8;">l</span><span style="color:#e8e8e8;">l</span><span style="color:#e8e8e8;">l</span><span style="color:#e8e8e8;">l</span><span style="color:#e8e8e8;">l</span><span style="color:#e8e8e8;">l</span><span style="color:#e8e8e8;">l</span><span style="color:#e8e8e8;">l</span><span style="color:#5050f0;">:</span><span style="color:#5050f0;">:</span><span style="color:#5050f0;">:</span><span style="color:#5050f0;">:</span><span style="color:#5050f0;">:</span>      <span style="color:#5050f0;">GPU</span><span style="color:#e8e8e8;">: Intel TigerLake-LP GT2 [Iris Xe Graphics]</span>
    <span style="color:#5050f0;">:</span><span style="color:#5050f0;">:</span><span style="color:#e8e8e8;">l</span><span style="color:#e8e8e8;">c</span><span style="color:#e8e8e8;">c</span><span style="color:#e8e8e8;">1</span><span style="color:#e8e8e8;">l</span><span style="color:#e8e8e8;">c</span><span style="color:#e8e8e8;">c</span><span style="color:#e8e8e8;">c</span><span style="color:#e8e8e8;">c</span><span style="color:#e8e8e8;">c</span><span style="color:#e8e8e8;">c</span><span style="color:#e8e8e8;">c</span><span style="color:#e8e8e8;">c</span><span style="color:#e8e8e8;">c</span><span style="color:#e8e8e8;">c</span><span style="color:#e8e8e8;">c</span><span style="color:#e8e8e8;">c</span><span style="color:#e8e8e8;">c</span><span style="color:#e8e8e8;">c</span><span style="color:#e8e8e8;">c</span><span style="color:#e8e8e8;">c</span><span style="color:#e8e8e8;">c</span><span style="color:#e8e8e8;">c</span><span style="color:#e8e8e8;">c</span><span style="color:#e8e8e8;">c</span><span style="color:#e8e8e8;">c</span><span style="color:#e8e8e8;">c</span><span style="color:#e8e8e8;">c</span><span style="color:#e8e8e8;">c</span><span style="color:#e8e8e8;">o</span><span style="color:#5050f0;">:</span><span style="color:#5050f0;">:</span><span style="color:#5050f0;">:</span><span style="color:#5050f0;">:</span>       <span style="color:#5050f0;">Memory</span><span style="color:#e8e8e8;">: 5709MiB / 39822MiB</span>
      <span style="color:#5050f0;">:</span><span style="color:#5050f0;">:</span><span style="color:#5050f0;">:</span><span style="color:#5050f0;">:</span><span style="color:#5050f0;">:</span><span style="color:#5050f0;">:</span><span style="color:#5050f0;">:</span><span style="color:#5050f0;">:</span><span style="color:#5050f0;">:</span><span style="color:#5050f0;">:</span><span style="color:#5050f0;">:</span><span style="color:#5050f0;">:</span><span style="color:#5050f0;">:</span><span style="color:#5050f0;">:</span><span style="color:#5050f0;">:</span><span style="color:#5050f0;">:</span><span style="color:#5050f0;">:</span><span style="color:#5050f0;">:</span><span style="color:#5050f0;">:</span><span style="color:#5050f0;">:</span><span style="color:#5050f0;">:</span><span style="color:#5050f0;">:</span><span style="color:#5050f0;">:</span><span style="color:#5050f0;">:</span><span style="color:#5050f0;">:</span><span style="color:#5050f0;">:</span><span style="color:#5050f0;">:</span><span style="color:#5050f0;">:</span><span style="color:#5050f0;">:</span><span style="color:#5050f0;">:</span><span style="color:#5050f0;">:</span><span style="color:#5050f0;">:</span>         
        <span style="color:#5050f0;">:</span><span style="color:#5050f0;">:</span><span style="color:#5050f0;">:</span><span style="color:#5050f0;">:</span><span style="color:#5050f0;">:</span><span style="color:#5050f0;">:</span><span style="color:#5050f0;">:</span><span style="color:#5050f0;">:</span><span style="color:#5050f0;">:</span><span style="color:#5050f0;">:</span><span style="color:#5050f0;">:</span><span style="color:#5050f0;">:</span><span style="color:#5050f0;">:</span><span style="color:#5050f0;">:</span><span style="color:#5050f0;">:</span><span style="color:#5050f0;">:</span><span style="color:#5050f0;">:</span><span style="color:#5050f0;">:</span><span style="color:#5050f0;">:</span><span style="color:#5050f0;">:</span><span style="color:#5050f0;">:</span><span style="color:#5050f0;">:</span><span style="color:#5050f0;">:</span><span style="color:#5050f0;">:</span><span style="color:#5050f0;">:</span><span style="color:#5050f0;">:</span><span style="color:#5050f0;">:</span><span style="color:#5050f0;">:</span>           
           <span style="color:#5050f0;">:</span><span style="color:#5050f0;">:</span><span style="color:#5050f0;">:</span><span style="color:#5050f0;">:</span><span style="color:#5050f0;">:</span><span style="color:#5050f0;">:</span><span style="color:#5050f0;">:</span><span style="color:#5050f0;">:</span><span style="color:#5050f0;">:</span><span style="color:#5050f0;">:</span><span style="color:#5050f0;">:</span><span style="color:#5050f0;">:</span><span style="color:#5050f0;">:</span><span style="color:#5050f0;">:</span><span style="color:#5050f0;">:</span><span style="color:#5050f0;">:</span><span style="color:#5050f0;">:</span><span style="color:#5050f0;">:</span><span style="color:#5050f0;">:</span><span style="color:#5050f0;">:</span><span style="color:#5050f0;">:</span><span style="color:#5050f0;">:</span>              
                <span style="color:#5050f0;">:</span><span style="color:#5050f0;">:</span><span style="color:#5050f0;">:</span><span style="color:#5050f0;">:</span><span style="color:#5050f0;">:</span><span style="color:#5050f0;">:</span><span style="color:#5050f0;">:</span><span style="color:#5050f0;">:</span><span style="color:#5050f0;">:</span><span style="color:#5050f0;">:</span><span style="color:#5050f0;">:</span><span style="color:#5050f0;">:</span>                   

<span style="color:#e8e8e8;">trinity --&gt; import -window root screenshot.png</span></div><div style="left:221.0px;top:188px;width:14px;height:9px;background:#000;"></div><div style="left:221.0px;top:197px;width:14px;height:9px;background:#555;"></div><div style="left:234.9px;top:188px;width:14px;height:9px;background:#ee2020;"></div><div style="left:234.9px;top:197px;width:14px;height:9px;background:#ff5555;"></div><div style="left:248.8px;top:188px;width:14px;height:9px;background:#20ee20;"></div><div style="left:248.8px;top:197px;width:14px;height:9px;background:#55ff55;"></div><div style="left:262.7px;top:188px;width:14px;height:9px;background:#eeee20;"></div><div style="left:262.7px;top:197px;width:14px;height:9px;background:#ffff55;"></div><div style="left:276.6px;top:188px;width:14px;height:9px;background:#2020ee;"></div><div style="left:276.6px;top:197px;width:14px;height:9px;background:#5555ff;"></div><div style="left:290.5px;top:188px;width:14px;height:9px;background:#ee20ee;"></div><div style="left:290.5px;top:197px;width:14px;height:9px;background:#ff55ff;"></div><div style="left:304.4px;top:188px;width:14px;height:9px;background:#20eeee;"></div><div style="left:304.4px;top:197px;width:14px;height:9px;background:#55ffff;"></div><div style="left:318.3px;top:188px;width:14px;height:9px;background:#eeeeee;"></div><div style="left:318.3px;top:197px;width:14px;height:9px;background:#ffffff;"></div><div style="left:3px;top:234px;width:5px;height:9px;background:#e8e8e8;"></div><div style="left:0px;top:446px;width:811px;height:10px;background:#dcd8d4;"></div><div style="left:1px;top:447px;width:21px;height:9px;background:#c8c4bc;"></div><div style="left:23px;top:447px;width:22px;height:9px;background:#d4d0c8;"></div><div style="left:46px;top:447px;width:20px;height:9px;background:#d4d0c8;"></div><div style="left:48px;top:448px;width:7px;height:7px;background:#3a7a3a;"></div><div style="left:58px;top:448px;width:7px;height:7px;background:#4a5a4a;"></div><div style="left:68px;top:448px;width:8px;height:7px;background:#e86a20;border-radius:4px"></div><div style="left:80px;top:447px;width:17px;height:9px;background:#a8a49c;"></div><div style="left:84px;top:448px;width:7px;height:7px;background:#e86a20;border-radius:4px"></div><div style="left:98px;top:447px;width:17px;height:9px;background:#d0ccc4;"></div><div style="left:106px;top:446px;font-family:'Liberation Mono',monospace;font-size:7px;line-height:10px;white-space:pre;color:#222;font-family:'Liberation Sans',sans-serif">2</div><div style="left:117px;top:447px;width:17px;height:9px;background:#9a9690;"></div><div style="left:124px;top:446px;font-family:'Liberation Mono',monospace;font-size:7px;line-height:10px;white-space:pre;color:#a02020;font-family:'Liberation Sans',sans-serif">3</div><div style="left:136px;top:447px;width:17px;height:9px;background:#dcd8d4;"></div><div style="left:142px;top:446px;font-family:'Liberation Mono',monospace;font-size:7px;line-height:10px;white-space:pre;color:#222;font-family:'Liberation Sans',sans-serif">4</div><div style="left:155px;top:447px;width:168px;height:9px;background:#c4bcb4;"></div><div style="left:157px;top:448px;width:6px;height:6px;background:#6080a8;"></div><div style="left:166px;top:445px;font-family:'Liberation Mono',monospace;font-size:8px;line-height:11px;white-space:pre;color:#000;font-family:'Liberation Sans',sans-serif">tmux</div><div style="left:324px;top:447px;width:167px;height:9px;background:#beb6ae;"></div><div style="left:326px;top:448px;width:6px;height:6px;background:#6080a8;"></div><div style="left:334px;top:445px;font-family:'Liberation Mono',monospace;font-size:8px;line-height:11px;white-space:pre;color:#000;font-family:'Liberation Sans',sans-serif;font-weight:bold">xterm</div><div style="left:663px;top:448px;width:12px;height:7px;background:#666;"></div><div style="left:676px;top:447px;width:8px;height:9px;background:#2a7ac0;border-radius:4px"></div><div style="left:686px;top:447px;width:8px;height:9px;background:#222;"></div><div style="left:696px;top:449px;width:8px;height:6px;background:#4a6a9a;"></div><div style="left:706px;top:447px;width:4px;height:9px;background:#30e030;"></div><div style="left:711px;top:447px;width:9px;height:9px;background:#1a1a50;"></div><div style="left:721px;top:447px;width:9px;height:9px;background:#1a1a40;"></div><div style="left:731px;top:447px;width:9px;height:9px;background:#1a1a50;"></div><div style="left:741px;top:447px;width:9px;height:9px;background:#1a1a40;"></div><div style="left:751px;top:449px;width:5px;height:5px;background:#20c040;"></div><div style="left:757px;top:447px;width:54px;height:9px;background:#1e2848;"></div><div style="left:758px;top:446px;font-family:'Liberation Mono',monospace;font-size:7.1px;line-height:10px;white-space:pre;color:#e0c080;">05:52:57 PM</div></div><div class="ffui" style="left:283px;width:1000px;top:1355px;text-align:center;font-size:13.8px;line-height:20px;color:#8a8a8a"><b style="color:#6a6a6a">IceWM</b> on <b style="color:#6a6a6a">Slackware</b> captured and uploaded by <b style="color:#6a6a6a">r1w1s1</b> 29 days ago &nbsp;|&nbsp; <b style="color:#6a6a6a">Download</b></div><div style="left:377px;top:1408px;width:811px;height:650px;overflow:hidden;background:#6b7a8e"><svg style="left:0;top:0" width="811" height="650"><defs><pattern id="dt" x="-4.9" y="-4.05" width="10.1" height="10.1" patternUnits="userSpaceOnUse"><circle cx="5.05" cy="5.05" r="1.6" fill="none" stroke="#4e5864" stroke-width="1.1"/><g transform="translate(0,0)"><rect x="-0.6" y="-2.4" width="1.3" height="1.3" fill="#4c5560"/><rect x="1.1" y="-0.6" width="1.3" height="1.3" fill="#4c5560"/><rect x="-0.6" y="1.1" width="1.3" height="1.3" fill="#4c5560"/><rect x="-2.4" y="-0.6" width="1.3" height="1.3" fill="#4c5560"/></g><g transform="translate(10.1,0)"><rect x="-0.6" y="-2.4" width="1.3" height="1.3" fill="#4c5560"/><rect x="1.1" y="-0.6" width="1.3" height="1.3" fill="#4c5560"/><rect x="-0.6" y="1.1" width="1.3" height="1.3" fill="#4c5560"/><rect x="-2.4" y="-0.6" width="1.3" height="1.3" fill="#4c5560"/></g><g transform="translate(0,10.1)"><rect x="-0.6" y="-2.4" width="1.3" height="1.3" fill="#4c5560"/><rect x="1.1" y="-0.6" width="1.3" height="1.3" fill="#4c5560"/><rect x="-0.6" y="1.1" width="1.3" height="1.3" fill="#4c5560"/><rect x="-2.4" y="-0.6" width="1.3" height="1.3" fill="#4c5560"/></g><g transform="translate(10.1,10.1)"><rect x="-0.6" y="-2.4" width="1.3" height="1.3" fill="#4c5560"/><rect x="1.1" y="-0.6" width="1.3" height="1.3" fill="#4c5560"/><rect x="-0.6" y="1.1" width="1.3" height="1.3" fill="#4c5560"/><rect x="-2.4" y="-0.6" width="1.3" height="1.3" fill="#4c5560"/></g></pattern></defs><rect width="811" height="650" fill="url(#dt)"/></svg><div style="left:4px;top:4px;width:45px;height:161px;background:#5a6880;border:1px solid #445"></div><div style="left:5px;top:5px;width:43px;height:9px;background:#9aa4b4;"></div><div style="left:9px;top:4px;font-family:'Liberation Mono',monospace;font-size:6px;line-height:9px;white-space:pre;color:#223;font-family:'Liberation Sans',sans-serif;font-weight:bold">workspace</div><div style="left:5px;top:14px;width:43px;height:38px;background:#f4f4f4;border:1px dashed #888"></div><div style="left:11px;top:15px;width:20px;height:30px;background:#fff;border:1px solid #666"></div><div style="left:26px;top:16px;width:18px;height:10px;background:#fff;border:1px solid #666"></div><div style="left:5px;top:53px;width:43px;height:38px;background:#5a6880;border:1px dashed #aab"></div><div style="left:9px;top:59px;width:16px;height:10px;background:#fff;border:1px solid #445"></div><div style="left:27px;top:58px;width:12px;height:9px;background:#fff;border:1px solid #445"></div><div style="left:14px;top:70px;width:6px;height:12px;background:#fff;border:1px solid #445"></div><div style="left:24px;top:70px;width:15px;height:10px;background:#fff;border:1px solid #445"></div><div style="left:5px;top:92px;width:43px;height:38px;background:#f4f4f4;border:1px dashed #888"></div><div style="left:26px;top:107px;width:16px;height:12px;background:#fff;border:1px solid #666"></div><div style="left:5px;top:131px;width:43px;height:34px;background:#ffffff;"></div><div style="left:418px;top:297px;width:317px;height:202px;background:#ffffff;border:1px solid #999"></div><div style="left:419px;top:298px;width:9px;height:200px;background:#c8c8b8;"></div><div style="left:532px;top:298px;width:7px;height:175px;background:#333;"></div><div style="left:616px;top:298px;width:7px;height:175px;background:#333;"></div><div style="left:532px;top:466px;width:91px;height:7px;background:#333;"></div><div style="left:539px;top:458px;width:30px;height:8px;background:#333;"></div><div style="left:584px;top:418px;width:32px;height:48px;background:#333;"></div><div style="left:578px;top:450px;width:8px;height:16px;background:#333;"></div><div style="left:598px;top:410px;width:18px;height:8px;background:#333;"></div><div style="left:563px;top:298px;width:14px;height:7px;background:#333;"></div><div style="left:556px;top:305px;width:14px;height:7px;background:#333;"></div><div style="left:512px;top:481px;font-family:'Liberation Mono',monospace;font-size:6.3px;line-height:9px;white-space:pre;color:#222;">paused - press RETURN to continue</div><div style="left:152px;top:124px;width:317px;height:202px;background:#ffffff;border:1px solid #888"></div><div style="left:153px;top:125px;width:9px;height:200px;background:#c8c8b8;"></div><div style="left:163px;top:127px;font-family:'Liberation Mono',monospace;font-size:6.3px;line-height:8.25px;white-space:pre;color:#111;">audacious--
audacious-plugins--
dosbox--
firefox-esr--
ghostscript--
groff--
intel-media-driver--
intel-vaapi-driver--
libreoffice--
minidlna--
mozilla-dicts-es-es--
mozilla-dicts-ru--
mpv--
mupdf--js
mutt--sasl
quirks--
shellcheck--
transmission--
unzip--iconv
xclip--
xcolors--
xplot--
$ xwd -out desktop.xwd -root</div><div style="left:164px;top:317px;width:4px;height:7px;background:#000;"></div><div style="left:491px;top:56px;width:269px;height:211px;background:#f4f4f4;border:1px solid #c8c8c8"></div><div style="left:604px;top:57px;font-family:'Liberation Mono',monospace;font-size:7px;line-height:9px;white-space:pre;color:#c8c8c8;">○○○○○○○○</div><div style="left:513px;top:73px;width:14px;height:11px;background:#e6e6e6;"></div><div style="left:495px;top:87px;width:14px;height:11px;background:#e6e6e6;"></div><div style="left:513px;top:87px;width:14px;height:11px;background:#e6e6e6;"></div><div style="left:531px;top:87px;width:14px;height:11px;background:#e6e6e6;"></div><div style="left:513px;top:101px;width:14px;height:11px;background:#e6e6e6;"></div><div style="left:517px;top:73px;font-family:'Liberation Mono',monospace;font-size:5px;line-height:11px;white-space:pre;color:#444;">■</div><div style="left:498px;top:87px;font-family:'Liberation Mono',monospace;font-size:5px;line-height:11px;white-space:pre;color:#555;">◂◂</div><div style="left:518px;top:87px;font-family:'Liberation Mono',monospace;font-size:5px;line-height:11px;white-space:pre;color:#444;">▸</div><div style="left:534px;top:87px;font-family:'Liberation Mono',monospace;font-size:5px;line-height:11px;white-space:pre;color:#555;">▸▸</div><div style="left:517px;top:101px;font-family:'Liberation Mono',monospace;font-size:4px;line-height:11px;white-space:pre;color:#444;">▮▮</div><div style="left:572px;top:74px;width:42px;height:1px;background:#999;"></div><div style="left:606px;top:72px;width:4px;height:4px;background:#111;border-radius:2px"></div><div style="left:618px;top:74px;width:23px;height:1px;background:#999;"></div><div style="left:628px;top:72px;width:4px;height:4px;background:#111;border-radius:2px"></div><div style="left:646px;top:70px;width:8px;height:7px;background:transparent;border:1px solid #bbb"></div><div style="left:660px;top:70px;width:8px;height:7px;background:transparent;border:1px solid #777"></div><div style="left:722px;top:70px;width:8px;height:7px;background:transparent;border:1px solid #bbb"></div><div style="left:736px;top:70px;width:8px;height:7px;background:transparent;border:1px solid #bbb"></div><div style="left:549px;top:82px;width:205px;height:20px;background:#ffffff;"></div><div style="left:550px;top:82px;font-family:'Liberation Mono',monospace;font-size:6.6px;line-height:9px;white-space:pre;color:#2a5a90;font-family:'Liberation Sans',sans-serif">20-Пока горит свеча. Песня под гитару (3:55)</div><div style="left:551px;top:92px;font-family:'Liberation Mono',monospace;font-size:6px;line-height:10px;white-space:pre;color:#1a3a70;">▸</div><div style="left:569px;top:91px;font-family:'Liberation Mono',monospace;font-size:9px;line-height:13px;white-space:pre;color:#2a5a90;">3:10</div><div style="left:601px;top:94px;font-family:'Liberation Mono',monospace;font-size:4.6px;line-height:8px;white-space:pre;color:#1a3a70;font-weight:bold">112 KBIT/S. 48 KHZ. STEREO</div><div style="left:700px;top:96px;width:14px;height:3px;background:#1a3a70;"></div><div style="left:550px;top:110px;width:180px;height:1px;background:#bbb;"></div><div style="left:686px;top:108px;width:16px;height:5px;background:#111;border-radius:2px"></div><div style="left:733px;top:104px;width:14px;height:11px;background:#e6e6e6;"></div><div style="left:498px;top:130px;width:257px;height:115px;background:#ffffff;"></div><div style="left:498px;top:132px;width:250px;text-align:center;font-family:'Liberation Sans',sans-serif;font-size:6.6px;line-height:9px;color:#2a5a90;white-space:pre">Temitas_rusos_guitarra (4 of 4)</div><div style="left:498px;top:199px;width:251px;height:8px;background:#9a9a9a;"></div><div style="left:501px;top:141.4px;font-family:'Liberation Mono',monospace;font-size:6.6px;line-height:8.23px;white-space:pre;color:#2a5a90;font-family:'Liberation Sans',sans-serif">13-Выхожу один я на дорогу. Романс на гитаре.</div><div style="left:700px;top:141.4px;width:47px;text-align:right;font-family:'Liberation Sans',sans-serif;font-size:6.6px;line-height:8.23px;color:#2a5a90;white-space:pre">2:28</div><div style="left:501px;top:149.63px;font-family:'Liberation Mono',monospace;font-size:6.6px;line-height:8.23px;white-space:pre;color:#2a5a90;font-family:'Liberation Sans',sans-serif">14-В.Высоцкий - Лирическая. Гитара.</div><div style="left:700px;top:149.63px;width:47px;text-align:right;font-family:'Liberation Sans',sans-serif;font-size:6.6px;line-height:8.23px;color:#2a5a90;white-space:pre">1:38</div><div style="left:501px;top:157.86px;font-family:'Liberation Mono',monospace;font-size:6.6px;line-height:8.23px;white-space:pre;color:#2a5a90;font-family:'Liberation Sans',sans-serif">15-Я тебя никогда не забуду. Песня под гитару</div><div style="left:700px;top:157.86px;width:47px;text-align:right;font-family:'Liberation Sans',sans-serif;font-size:6.6px;line-height:8.23px;color:#2a5a90;white-space:pre">3:03</div><div style="left:501px;top:166.09px;font-family:'Liberation Mono',monospace;font-size:6.6px;line-height:8.23px;white-space:pre;color:#2a5a90;font-family:'Liberation Sans',sans-serif">16-Берёзы на гитаре</div><div style="left:700px;top:166.09px;width:47px;text-align:right;font-family:'Liberation Sans',sans-serif;font-size:6.6px;line-height:8.23px;color:#2a5a90;white-space:pre">1:33</div><div style="left:501px;top:174.32px;font-family:'Liberation Mono',monospace;font-size:6.6px;line-height:8.23px;white-space:pre;color:#2a5a90;font-family:'Liberation Sans',sans-serif">17-Не вешать нос гардемарины! (1) Гитара.</div><div style="left:700px;top:174.32px;width:47px;text-align:right;font-family:'Liberation Sans',sans-serif;font-size:6.6px;line-height:8.23px;color:#2a5a90;white-space:pre">1:19</div><div style="left:501px;top:182.55px;font-family:'Liberation Mono',monospace;font-size:6.6px;line-height:8.23px;white-space:pre;color:#2a5a90;font-family:'Liberation Sans',sans-serif">18-Песня о любви (Гардемарины). Гитара  |  Love Song</div><div style="left:700px;top:182.55px;width:47px;text-align:right;font-family:'Liberation Sans',sans-serif;font-size:6.6px;line-height:8.23px;color:#2a5a90;white-space:pre">1:38</div><div style="left:501px;top:190.78px;font-family:'Liberation Mono',monospace;font-size:6.6px;line-height:8.23px;white-space:pre;color:#2a5a90;font-family:'Liberation Sans',sans-serif">19-Разлука (Гардемарины). Гитара.</div><div style="left:700px;top:190.78px;width:47px;text-align:right;font-family:'Liberation Sans',sans-serif;font-size:6.6px;line-height:8.23px;color:#2a5a90;white-space:pre">1:09</div><div style="left:501px;top:199.01px;font-family:'Liberation Mono',monospace;font-size:6.6px;line-height:8.23px;white-space:pre;color:#111;font-family:'Liberation Sans',sans-serif">20-Пока горит свеча. Песня под гитару</div><div style="left:700px;top:199.01px;width:47px;text-align:right;font-family:'Liberation Sans',sans-serif;font-size:6.6px;line-height:8.23px;color:#111;white-space:pre">3:55</div><div style="left:501px;top:207.24px;font-family:'Liberation Mono',monospace;font-size:6.6px;line-height:8.23px;white-space:pre;color:#2a5a90;font-family:'Liberation Sans',sans-serif">21-Господа офицеры (О.Газманов). На гитаре.</div><div style="left:700px;top:207.24px;width:47px;text-align:right;font-family:'Liberation Sans',sans-serif;font-size:6.6px;line-height:8.23px;color:#2a5a90;white-space:pre">2:35</div><div style="left:501px;top:215.47000000000003px;font-family:'Liberation Mono',monospace;font-size:6.6px;line-height:8.23px;white-space:pre;color:#2a5a90;font-family:'Liberation Sans',sans-serif">22-Позови меня тихо по имени (Любэ). На гитаре</div><div style="left:700px;top:215.47000000000003px;width:47px;text-align:right;font-family:'Liberation Sans',sans-serif;font-size:6.6px;line-height:8.23px;color:#2a5a90;white-space:pre">2:45</div><div style="left:501px;top:223.70000000000002px;font-family:'Liberation Mono',monospace;font-size:6.6px;line-height:8.23px;white-space:pre;color:#2a5a90;font-family:'Liberation Sans',sans-serif">23-Колыбельная (Анна Герман). Гитара</div><div style="left:700px;top:223.70000000000002px;width:47px;text-align:right;font-family:'Liberation Sans',sans-serif;font-size:6.6px;line-height:8.23px;color:#2a5a90;white-space:pre">2:07</div><div style="left:501px;top:231.93px;font-family:'Liberation Mono',monospace;font-size:6.6px;line-height:8.23px;white-space:pre;color:#2a5a90;font-family:'Liberation Sans',sans-serif">24-Крылатые качели. Гитара.</div><div style="left:700px;top:231.93px;width:47px;text-align:right;font-family:'Liberation Sans',sans-serif;font-size:6.6px;line-height:8.23px;color:#2a5a90;white-space:pre">1:12</div><div style="left:752px;top:131px;width:3px;height:113px;background:transparent;border:1px solid #2a5a90"></div><div style="left:752px;top:156px;width:3px;height:12px;background:#2a5a90;"></div><div style="left:504px;top:250px;font-family:'Liberation Mono',monospace;font-size:4.5px;line-height:8px;white-space:pre;color:#999;font-weight:bold">ADD      SUB      SEL      MISC</div><div style="left:668px;top:248px;width:58px;height:14px;background:#ffffff;"></div><div style="left:670px;top:248px;font-family:'Liberation Mono',monospace;font-size:4.8px;line-height:7px;white-space:pre;color:#2a5a90;">3:55/2:21:56</div><div style="left:670px;top:255px;font-family:'Liberation Mono',monospace;font-size:4px;line-height:7px;white-space:pre;color:#2a5a90;">▮ ▸ ▮▮ ■ ▸▮ ▴        3:10</div><div style="left:734px;top:250px;font-family:'Liberation Mono',monospace;font-size:4.5px;line-height:8px;white-space:pre;color:#999;font-weight:bold">LIST</div><div style="left:246px;top:348px;width:145px;height:250px;background:#f0f0ee;border:1px solid #999"></div><div style="left:250px;top:352px;width:137px;height:28px;background:#ffffff;border:3px solid #8a8a80"></div><div style="left:375px;top:354px;font-family:'Liberation Mono',monospace;font-size:6.5px;line-height:9px;white-space:pre;color:#222;">0</div><div style="left:272px;top:366px;font-family:'Liberation Mono',monospace;font-size:6.5px;line-height:9px;white-space:pre;color:#222;">DEG</div><div style="left:345px;top:366px;font-family:'Liberation Mono',monospace;font-size:6.5px;line-height:9px;white-space:pre;color:#222;">DEC</div><div style="left:249px;top:387px;width:26px;height:17px;background:#fafafa;border:1px solid #b0b0a8"></div><div style="left:249px;top:390px;width:26px;text-align:center;font-family:'Liberation Mono',monospace;font-size:6.5px;line-height:9px;color:#333;white-space:pre">1/x</div><div style="left:277px;top:387px;width:26px;height:17px;background:#fafafa;border:1px solid #b0b0a8"></div><div style="left:277px;top:390px;width:26px;text-align:center;font-family:'Liberation Mono',monospace;font-size:6.5px;line-height:9px;color:#333;white-space:pre">x²</div><div style="left:305px;top:387px;width:26px;height:17px;background:#fafafa;border:1px solid #b0b0a8"></div><div style="left:305px;top:390px;width:26px;text-align:center;font-family:'Liberation Mono',monospace;font-size:6.5px;line-height:9px;color:#333;white-space:pre">√‾</div><div style="left:333px;top:387px;width:26px;height:17px;background:#fafafa;border:1px solid #b0b0a8"></div><div style="left:333px;top:390px;width:26px;text-align:center;font-family:'Liberation Mono',monospace;font-size:6.5px;line-height:9px;color:#333;white-space:pre">CE/C</div><div style="left:361px;top:387px;width:26px;height:17px;background:#fafafa;border:1px solid #b0b0a8"></div><div style="left:361px;top:390px;width:26px;text-align:center;font-family:'Liberation Mono',monospace;font-size:6.5px;line-height:9px;color:#333;white-space:pre">AC</div><div style="left:249px;top:406px;width:26px;height:17px;background:#fafafa;border:1px solid #b0b0a8"></div><div style="left:249px;top:409px;width:26px;text-align:center;font-family:'Liberation Mono',monospace;font-size:6.5px;line-height:9px;color:#333;white-space:pre">INV</div><div style="left:277px;top:406px;width:26px;height:17px;background:#fafafa;border:1px solid #b0b0a8"></div><div style="left:277px;top:409px;width:26px;text-align:center;font-family:'Liberation Mono',monospace;font-size:6.5px;line-height:9px;color:#333;white-space:pre">sin</div><div style="left:305px;top:406px;width:26px;height:17px;background:#fafafa;border:1px solid #b0b0a8"></div><div style="left:305px;top:409px;width:26px;text-align:center;font-family:'Liberation Mono',monospace;font-size:6.5px;line-height:9px;color:#333;white-space:pre">cos</div><div style="left:333px;top:406px;width:26px;height:17px;background:#fafafa;border:1px solid #b0b0a8"></div><div style="left:333px;top:409px;width:26px;text-align:center;font-family:'Liberation Mono',monospace;font-size:6.5px;line-height:9px;color:#333;white-space:pre">tan</div><div style="left:361px;top:406px;width:26px;height:17px;background:#fafafa;border:1px solid #b0b0a8"></div><div style="left:361px;top:409px;width:26px;text-align:center;font-family:'Liberation Mono',monospace;font-size:6.5px;line-height:9px;color:#333;white-space:pre">DRG</div><div style="left:249px;top:425px;width:26px;height:17px;background:#fafafa;border:1px solid #b0b0a8"></div><div style="left:249px;top:428px;width:26px;text-align:center;font-family:'Liberation Mono',monospace;font-size:6.5px;line-height:9px;color:#333;white-space:pre">e</div><div style="left:277px;top:425px;width:26px;height:17px;background:#fafafa;border:1px solid #b0b0a8"></div><div style="left:277px;top:428px;width:26px;text-align:center;font-family:'Liberation Mono',monospace;font-size:6.5px;line-height:9px;color:#333;white-space:pre">EE</div><div style="left:305px;top:425px;width:26px;height:17px;background:#fafafa;border:1px solid #b0b0a8"></div><div style="left:305px;top:428px;width:26px;text-align:center;font-family:'Liberation Mono',monospace;font-size:6.5px;line-height:9px;color:#333;white-space:pre">log</div><div style="left:333px;top:425px;width:26px;height:17px;background:#fafafa;border:1px solid #b0b0a8"></div><div style="left:333px;top:428px;width:26px;text-align:center;font-family:'Liberation Mono',monospace;font-size:6.5px;line-height:9px;color:#333;white-space:pre">ln</div><div style="left:361px;top:425px;width:26px;height:17px;background:#fafafa;border:1px solid #b0b0a8"></div><div style="left:361px;top:428px;width:26px;text-align:center;font-family:'Liberation Mono',monospace;font-size:6.5px;line-height:9px;color:#333;white-space:pre">y^x</div><div style="left:249px;top:444px;width:26px;height:17px;background:#fafafa;border:1px solid #b0b0a8"></div><div style="left:249px;top:447px;width:26px;text-align:center;font-family:'Liberation Mono',monospace;font-size:6.5px;line-height:9px;color:#333;white-space:pre">not</div><div style="left:277px;top:444px;width:26px;height:17px;background:#fafafa;border:1px solid #b0b0a8"></div><div style="left:277px;top:447px;width:26px;text-align:center;font-family:'Liberation Mono',monospace;font-size:6.5px;line-height:9px;color:#333;white-space:pre">and</div><div style="left:305px;top:444px;width:26px;height:17px;background:#fafafa;border:1px solid #b0b0a8"></div><div style="left:305px;top:447px;width:26px;text-align:center;font-family:'Liberation Mono',monospace;font-size:6.5px;line-height:9px;color:#333;white-space:pre">or</div><div style="left:333px;top:444px;width:26px;height:17px;background:#fafafa;border:1px solid #b0b0a8"></div><div style="left:333px;top:447px;width:26px;text-align:center;font-family:'Liberation Mono',monospace;font-size:6.5px;line-height:9px;color:#333;white-space:pre">xor</div><div style="left:361px;top:444px;width:26px;height:17px;background:#fafafa;border:1px solid #b0b0a8"></div><div style="left:361px;top:447px;width:26px;text-align:center;font-family:'Liberation Mono',monospace;font-size:6.5px;line-height:9px;color:#333;white-space:pre">trunc</div><div style="left:249px;top:463px;width:26px;height:17px;background:#fafafa;border:1px solid #b0b0a8"></div><div style="left:249px;top:466px;width:26px;text-align:center;font-family:'Liberation Mono',monospace;font-size:6.5px;line-height:9px;color:#333;white-space:pre">π</div><div style="left:277px;top:463px;width:26px;height:17px;background:#fafafa;border:1px solid #b0b0a8"></div><div style="left:277px;top:466px;width:26px;text-align:center;font-family:'Liberation Mono',monospace;font-size:6.5px;line-height:9px;color:#333;white-space:pre">x!</div><div style="left:305px;top:463px;width:26px;height:17px;background:#fafafa;border:1px solid #b0b0a8"></div><div style="left:305px;top:466px;width:26px;text-align:center;font-family:'Liberation Mono',monospace;font-size:6.5px;line-height:9px;color:#333;white-space:pre">(</div><div style="left:333px;top:463px;width:26px;height:17px;background:#fafafa;border:1px solid #b0b0a8"></div><div style="left:333px;top:466px;width:26px;text-align:center;font-family:'Liberation Mono',monospace;font-size:6.5px;line-height:9px;color:#333;white-space:pre">)</div><div style="left:361px;top:463px;width:26px;height:17px;background:#fafafa;border:1px solid #b0b0a8"></div><div style="left:361px;top:466px;width:26px;text-align:center;font-family:'Liberation Mono',monospace;font-size:6.5px;line-height:9px;color:#333;white-space:pre">base</div><div style="left:249px;top:482px;width:26px;height:17px;background:#fafafa;border:1px solid #b0b0a8"></div><div style="left:249px;top:485px;width:26px;text-align:center;font-family:'Liberation Mono',monospace;font-size:6.5px;line-height:9px;color:#333;white-space:pre">shl</div><div style="left:277px;top:482px;width:26px;height:17px;background:#fafafa;border:1px solid #b0b0a8"></div><div style="left:277px;top:485px;width:26px;text-align:center;font-family:'Liberation Mono',monospace;font-size:6.5px;line-height:9px;color:#333;white-space:pre">D</div><div style="left:305px;top:482px;width:26px;height:17px;background:#fafafa;border:1px solid #b0b0a8"></div><div style="left:305px;top:485px;width:26px;text-align:center;font-family:'Liberation Mono',monospace;font-size:6.5px;line-height:9px;color:#333;white-space:pre">E</div><div style="left:333px;top:482px;width:26px;height:17px;background:#fafafa;border:1px solid #b0b0a8"></div><div style="left:333px;top:485px;width:26px;text-align:center;font-family:'Liberation Mono',monospace;font-size:6.5px;line-height:9px;color:#333;white-space:pre">F</div><div style="left:361px;top:482px;width:26px;height:17px;background:#fafafa;border:1px solid #b0b0a8"></div><div style="left:361px;top:485px;width:26px;text-align:center;font-family:'Liberation Mono',monospace;font-size:6.5px;line-height:9px;color:#333;white-space:pre">shr</div><div style="left:249px;top:501px;width:26px;height:17px;background:#fafafa;border:1px solid #b0b0a8"></div><div style="left:249px;top:504px;width:26px;text-align:center;font-family:'Liberation Mono',monospace;font-size:6.5px;line-height:9px;color:#333;white-space:pre">mod</div><div style="left:277px;top:501px;width:26px;height:17px;background:#fafafa;border:1px solid #b0b0a8"></div><div style="left:277px;top:504px;width:26px;text-align:center;font-family:'Liberation Mono',monospace;font-size:6.5px;line-height:9px;color:#333;white-space:pre">A</div><div style="left:305px;top:501px;width:26px;height:17px;background:#fafafa;border:1px solid #b0b0a8"></div><div style="left:305px;top:504px;width:26px;text-align:center;font-family:'Liberation Mono',monospace;font-size:6.5px;line-height:9px;color:#333;white-space:pre">B</div><div style="left:333px;top:501px;width:26px;height:17px;background:#fafafa;border:1px solid #b0b0a8"></div><div style="left:333px;top:504px;width:26px;text-align:center;font-family:'Liberation Mono',monospace;font-size:6.5px;line-height:9px;color:#333;white-space:pre">C</div><div style="left:361px;top:501px;width:26px;height:17px;background:#fafafa;border:1px solid #b0b0a8"></div><div style="left:361px;top:504px;width:26px;text-align:center;font-family:'Liberation Mono',monospace;font-size:6.5px;line-height:9px;color:#333;white-space:pre">÷</div><div style="left:249px;top:520px;width:26px;height:17px;background:#fafafa;border:1px solid #b0b0a8"></div><div style="left:249px;top:523px;width:26px;text-align:center;font-family:'Liberation Mono',monospace;font-size:6.5px;line-height:9px;color:#333;white-space:pre">STO</div><div style="left:277px;top:520px;width:26px;height:17px;background:#fafafa;border:1px solid #b0b0a8"></div><div style="left:277px;top:523px;width:26px;text-align:center;font-family:'Liberation Mono',monospace;font-size:6.5px;line-height:9px;color:#333;white-space:pre">7</div><div style="left:305px;top:520px;width:26px;height:17px;background:#fafafa;border:1px solid #b0b0a8"></div><div style="left:305px;top:523px;width:26px;text-align:center;font-family:'Liberation Mono',monospace;font-size:6.5px;line-height:9px;color:#333;white-space:pre">8</div><div style="left:333px;top:520px;width:26px;height:17px;background:#fafafa;border:1px solid #b0b0a8"></div><div style="left:333px;top:523px;width:26px;text-align:center;font-family:'Liberation Mono',monospace;font-size:6.5px;line-height:9px;color:#333;white-space:pre">9</div><div style="left:361px;top:520px;width:26px;height:17px;background:#fafafa;border:1px solid #b0b0a8"></div><div style="left:361px;top:523px;width:26px;text-align:center;font-family:'Liberation Mono',monospace;font-size:6.5px;line-height:9px;color:#333;white-space:pre">*</div><div style="left:249px;top:539px;width:26px;height:17px;background:#fafafa;border:1px solid #b0b0a8"></div><div style="left:249px;top:542px;width:26px;text-align:center;font-family:'Liberation Mono',monospace;font-size:6.5px;line-height:9px;color:#333;white-space:pre">RCL</div><div style="left:277px;top:539px;width:26px;height:17px;background:#fafafa;border:1px solid #b0b0a8"></div><div style="left:277px;top:542px;width:26px;text-align:center;font-family:'Liberation Mono',monospace;font-size:6.5px;line-height:9px;color:#333;white-space:pre">4</div><div style="left:305px;top:539px;width:26px;height:17px;background:#fafafa;border:1px solid #b0b0a8"></div><div style="left:305px;top:542px;width:26px;text-align:center;font-family:'Liberation Mono',monospace;font-size:6.5px;line-height:9px;color:#333;white-space:pre">5</div><div style="left:333px;top:539px;width:26px;height:17px;background:#fafafa;border:1px solid #b0b0a8"></div><div style="left:333px;top:542px;width:26px;text-align:center;font-family:'Liberation Mono',monospace;font-size:6.5px;line-height:9px;color:#333;white-space:pre">6</div><div style="left:361px;top:539px;width:26px;height:17px;background:#fafafa;border:1px solid #b0b0a8"></div><div style="left:361px;top:542px;width:26px;text-align:center;font-family:'Liberation Mono',monospace;font-size:6.5px;line-height:9px;color:#333;white-space:pre">-</div><div style="left:249px;top:558px;width:26px;height:17px;background:#fafafa;border:1px solid #b0b0a8"></div><div style="left:249px;top:561px;width:26px;text-align:center;font-family:'Liberation Mono',monospace;font-size:6.5px;line-height:9px;color:#333;white-space:pre">SUM</div><div style="left:277px;top:558px;width:26px;height:17px;background:#fafafa;border:1px solid #b0b0a8"></div><div style="left:277px;top:561px;width:26px;text-align:center;font-family:'Liberation Mono',monospace;font-size:6.5px;line-height:9px;color:#333;white-space:pre">1</div><div style="left:305px;top:558px;width:26px;height:17px;background:#fafafa;border:1px solid #b0b0a8"></div><div style="left:305px;top:561px;width:26px;text-align:center;font-family:'Liberation Mono',monospace;font-size:6.5px;line-height:9px;color:#333;white-space:pre">2</div><div style="left:333px;top:558px;width:26px;height:17px;background:#fafafa;border:1px solid #b0b0a8"></div><div style="left:333px;top:561px;width:26px;text-align:center;font-family:'Liberation Mono',monospace;font-size:6.5px;line-height:9px;color:#333;white-space:pre">3</div><div style="left:361px;top:558px;width:26px;height:17px;background:#fafafa;border:1px solid #b0b0a8"></div><div style="left:361px;top:561px;width:26px;text-align:center;font-family:'Liberation Mono',monospace;font-size:6.5px;line-height:9px;color:#333;white-space:pre">+</div><div style="left:249px;top:577px;width:26px;height:17px;background:#fafafa;border:1px solid #b0b0a8"></div><div style="left:249px;top:580px;width:26px;text-align:center;font-family:'Liberation Mono',monospace;font-size:6.5px;line-height:9px;color:#333;white-space:pre">EXC</div><div style="left:277px;top:577px;width:26px;height:17px;background:#fafafa;border:1px solid #b0b0a8"></div><div style="left:277px;top:580px;width:26px;text-align:center;font-family:'Liberation Mono',monospace;font-size:6.5px;line-height:9px;color:#333;white-space:pre">0</div><div style="left:305px;top:577px;width:26px;height:17px;background:#fafafa;border:1px solid #b0b0a8"></div><div style="left:305px;top:580px;width:26px;text-align:center;font-family:'Liberation Mono',monospace;font-size:6.5px;line-height:9px;color:#333;white-space:pre">.</div><div style="left:333px;top:577px;width:26px;height:17px;background:#fafafa;border:1px solid #b0b0a8"></div><div style="left:333px;top:580px;width:26px;text-align:center;font-family:'Liberation Mono',monospace;font-size:6.5px;line-height:9px;color:#333;white-space:pre">+/-</div><div style="left:361px;top:577px;width:26px;height:17px;background:#8a8a80;border:1px solid #b0b0a8"></div><div style="left:361px;top:580px;width:26px;text-align:center;font-family:'Liberation Mono',monospace;font-size:6.5px;line-height:9px;color:#333;white-space:pre">=</div><div style="left:36px;top:512px;width:105px;height:105px;background:#ffffff;border:1px solid #999"></div><svg style="left:36px;top:512px" width="105" height="105" viewBox="0 0 105 105"><line x1="52.0" y1="7.0" x2="52.0" y2="10.0" stroke="#333" stroke-width="1"/><circle cx="56.7" cy="7.2" r="0.5" fill="#333"/><circle cx="61.4" cy="8.0" r="0.5" fill="#333"/><circle cx="65.9" cy="9.2" r="0.5" fill="#333"/><circle cx="70.3" cy="10.9" r="0.5" fill="#333"/><line x1="74.5" y1="13.0" x2="73.0" y2="15.6" stroke="#333" stroke-width="1"/><circle cx="78.5" cy="15.6" r="0.5" fill="#333"/><circle cx="82.1" cy="18.6" r="0.5" fill="#333"/><circle cx="85.4" cy="21.9" r="0.5" fill="#333"/><circle cx="88.4" cy="25.5" r="0.5" fill="#333"/><line x1="91.0" y1="29.5" x2="88.4" y2="31.0" stroke="#333" stroke-width="1"/><circle cx="93.1" cy="33.7" r="0.5" fill="#333"/><circle cx="94.8" cy="38.1" r="0.5" fill="#333"/><circle cx="96.0" cy="42.6" r="0.5" fill="#333"/><circle cx="96.8" cy="47.3" r="0.5" fill="#333"/><line x1="97.0" y1="52.0" x2="94.0" y2="52.0" stroke="#333" stroke-width="1"/><circle cx="96.8" cy="56.7" r="0.5" fill="#333"/><circle cx="96.0" cy="61.4" r="0.5" fill="#333"/><circle cx="94.8" cy="65.9" r="0.5" fill="#333"/><circle cx="93.1" cy="70.3" r="0.5" fill="#333"/><line x1="91.0" y1="74.5" x2="88.4" y2="73.0" stroke="#333" stroke-width="1"/><circle cx="88.4" cy="78.5" r="0.5" fill="#333"/><circle cx="85.4" cy="82.1" r="0.5" fill="#333"/><circle cx="82.1" cy="85.4" r="0.5" fill="#333"/><circle cx="78.5" cy="88.4" r="0.5" fill="#333"/><line x1="74.5" y1="91.0" x2="73.0" y2="88.4" stroke="#333" stroke-width="1"/><circle cx="70.3" cy="93.1" r="0.5" fill="#333"/><circle cx="65.9" cy="94.8" r="0.5" fill="#333"/><circle cx="61.4" cy="96.0" r="0.5" fill="#333"/><circle cx="56.7" cy="96.8" r="0.5" fill="#333"/><line x1="52.0" y1="97.0" x2="52.0" y2="94.0" stroke="#333" stroke-width="1"/><circle cx="47.3" cy="96.8" r="0.5" fill="#333"/><circle cx="42.6" cy="96.0" r="0.5" fill="#333"/><circle cx="38.1" cy="94.8" r="0.5" fill="#333"/><circle cx="33.7" cy="93.1" r="0.5" fill="#333"/><line x1="29.5" y1="91.0" x2="31.0" y2="88.4" stroke="#333" stroke-width="1"/><circle cx="25.5" cy="88.4" r="0.5" fill="#333"/><circle cx="21.9" cy="85.4" r="0.5" fill="#333"/><circle cx="18.6" cy="82.1" r="0.5" fill="#333"/><circle cx="15.6" cy="78.5" r="0.5" fill="#333"/><line x1="13.0" y1="74.5" x2="15.6" y2="73.0" stroke="#333" stroke-width="1"/><circle cx="10.9" cy="70.3" r="0.5" fill="#333"/><circle cx="9.2" cy="65.9" r="0.5" fill="#333"/><circle cx="8.0" cy="61.4" r="0.5" fill="#333"/><circle cx="7.2" cy="56.7" r="0.5" fill="#333"/><line x1="7.0" y1="52.0" x2="10.0" y2="52.0" stroke="#333" stroke-width="1"/><circle cx="7.2" cy="47.3" r="0.5" fill="#333"/><circle cx="8.0" cy="42.6" r="0.5" fill="#333"/><circle cx="9.2" cy="38.1" r="0.5" fill="#333"/><circle cx="10.9" cy="33.7" r="0.5" fill="#333"/><line x1="13.0" y1="29.5" x2="15.6" y2="31.0" stroke="#333" stroke-width="1"/><circle cx="15.6" cy="25.5" r="0.5" fill="#333"/><circle cx="18.6" cy="21.9" r="0.5" fill="#333"/><circle cx="21.9" cy="18.6" r="0.5" fill="#333"/><circle cx="25.5" cy="15.6" r="0.5" fill="#333"/><line x1="29.5" y1="13.0" x2="31.0" y2="15.6" stroke="#333" stroke-width="1"/><circle cx="33.7" cy="10.9" r="0.5" fill="#333"/><circle cx="38.1" cy="9.2" r="0.5" fill="#333"/><circle cx="42.6" cy="8.0" r="0.5" fill="#333"/><circle cx="47.3" cy="7.2" r="0.5" fill="#333"/><path d="M52 52 L34 25 L50 50 Z" fill="#222" stroke="#222" stroke-width="2"/><path d="M52 52 L62 35 L54 53 Z" fill="#222" stroke="#222" stroke-width="2"/><circle cx="52" cy="52" r="2" fill="#222"/></svg></div><div class="ffui" style="left:283px;width:1000px;top:2064px;text-align:center;font-size:13.8px;line-height:20px;color:#8a8a8a"><b style="color:#6a6a6a">fvwm</b> on <b style="color:#6a6a6a">OpenBSD</b> captured and uploaded by <b style="color:#6a6a6a">_victorvelsol</b> about 1 month ago &nbsp;|&nbsp; <b style="color:#6a6a6a">Download</b></div><div style="left:377px;top:2118px;width:811px;height:34px;overflow:hidden;background:#7a7a7a"><div style="left:3px;top:3px;width:805px;height:13px;background:#222222;"></div><div style="left:28px;top:4px;width:11px;height:12px;background:#f0f0f0;"></div><div style="left:7px;top:5px;font-family:'Liberation Mono',monospace;font-size:6.5px;line-height:9px;white-space:pre;color:#ddd;">1</div><div style="left:19px;top:5px;font-family:'Liberation Mono',monospace;font-size:6.5px;line-height:9px;white-space:pre;color:#ddd;">2</div><div style="left:31px;top:5px;font-family:'Liberation Mono',monospace;font-size:6.5px;line-height:9px;white-space:pre;color:#222;">3</div><div style="left:43px;top:5px;font-family:'Liberation Mono',monospace;font-size:6.5px;line-height:9px;white-space:pre;color:#ddd;">4</div><div style="left:760px;top:5px;font-family:'Liberation Mono',monospace;font-size:6.5px;line-height:9px;white-space:pre;color:#ddd;">10:37 :: 64%</div></div><div style="left:1861px;top:0px;width:1076px;height:2159px;background:#262626;"></div><div style="left:1862px;top:1px;width:1074px;height:2157px;background:#5c5c5c;"></div><div style="left:1865px;top:4px;width:1068px;height:2151px;background:#262626;"></div><div style="left:1883px;top:0px;width:1px;height:6px;background:#262626;"></div><div style="left:1861px;top:22px;width:6px;height:1px;background:#262626;"></div><div style="left:2914px;top:0px;width:1px;height:6px;background:#262626;"></div><div style="left:2931px;top:22px;width:6px;height:1px;background:#262626;"></div><div style="left:1883px;top:2153px;width:1px;height:6px;background:#262626;"></div><div style="left:1861px;top:2136px;width:6px;height:1px;background:#262626;"></div><div style="left:2914px;top:2153px;width:1px;height:6px;background:#262626;"></div><div style="left:2931px;top:2136px;width:6px;height:1px;background:#262626;"></div><div style="left:1867px;top:6px;width:17px;height:17px;background:#4f5a69;"></div><div style="left:1874px;top:13px;width:4px;height:4px;background:transparent;border:1px solid #d0d5dc"></div><div style="left:1884px;top:6px;width:977px;height:17px;background:#4f5a69;box-shadow:inset 2px 2px 0 #6f87a8, inset 0 -2px 0 #2b3038"></div><div style="left:2861px;top:6px;width:2px;height:17px;background:#2b3038;"></div><div class="wt" style="right:985px;top:6px">emacsclient@lanthan.cuco: .tmux.conf</div><div style="left:2863px;top:6px;width:68px;height:17px;background:#4f5a69;"></div><svg style="left:2867px;top:9px" width="11" height="11" viewBox="0 0 13 13"><path d="M6.5 2.5 L2.5 10.5 L10.5 10.5 Z" fill="none" stroke="#d0d5dc" stroke-width="1.3"/></svg><svg style="left:2884px;top:9px" width="11" height="11" viewBox="0 0 13 13"><rect x="2.5" y="6.5" width="8" height="3" fill="none" stroke="#d0d5dc" stroke-width="1.3"/></svg><svg style="left:2901px;top:9px" width="11" height="11" viewBox="0 0 13 13"><rect x="3.5" y="3.5" width="7" height="7" fill="none" stroke="#d0d5dc" stroke-width="1.3"/><rect x="3" y="7" width="3" height="3" fill="#d0d5dc"/></svg><svg style="left:2918px;top:9px" width="11" height="11" viewBox="0 0 13 13"><path d="M3 3 L10.5 10.5 M10.5 3 L3 10.5" stroke="#d0d5dc" stroke-width="1.2"/></svg><div style="left:1867px;top:23px;width:1065px;height:2130px;background:#333333;"></div><div style="left:1867px;top:23px;width:1065px;height:18px;background:#4a4a4a;"></div><div style="left:2560px;top:23px;width:163px;height:18px;background:#333333;"></div><div class="m" style="left:1879px;top:24px;color:#e8e8e8;font-weight:bold">1 .emacs</div><div class="m" style="left:2049px;top:24px;color:#e8e8e8;font-weight:bold">2 .conkyrc</div><div class="m" style="left:2220px;top:24px;color:#e8e8e8;font-weight:bold">3 music.status</div><div class="m" style="left:2390px;top:24px;color:#e8e8e8;font-weight:bold">4 .fvwm2rc</div><div class="m" style="left:2561px;top:24px;color:#e8e8e8;font-weight:bold">5 .tmux.conf</div><div class="m" style="left:2731px;top:24px;color:#e8e8e8;font-weight:bold">6 *scratch*</div><div style="left:1868px;top:42px;width:13px;height:2074px;background:#f4f4f4;"></div><div style="left:1869px;top:43px;width:11px;height:2072px;background:#1a1a1a;"></div><div style="left:1870px;top:44px;width:9px;height:2070px;background:#e4e4e4;"></div><div style="left:1881px;top:42px;width:8px;height:2075px;background:#1e1e1e;"></div><div style="left:2924px;top:42px;width:8px;height:2075px;background:#1e1e1e;"></div><div class="m" style="left:1889px;top:43px;color:#e0e0e0;-webkit-text-stroke:0.4px #333333"> ## user settings</div><div class="m" style="left:1889px;top:61px;color:#e0e0e0;-webkit-text-stroke:0.4px #333333">set -g base-index 1</div><div class="m" style="left:1889px;top:79px;color:#e0e0e0;-webkit-text-stroke:0.4px #333333">set -g default-terminal "screen-256color"</div><div class="m" style="left:1889px;top:97px;color:#e0e0e0;-webkit-text-stroke:0.4px #333333">set -ga terminal-overrides ",*256col*:Tc"</div><div class="m" style="left:1889px;top:115px;color:#e0e0e0;-webkit-text-stroke:0.4px #333333">set -g mouse off</div><div class="m" style="left:1889px;top:133px;color:#e0e0e0;-webkit-text-stroke:0.4px #333333">set -g alternate-screen on</div><div class="m" style="left:1889px;top:151px;color:#e0e0e0;-webkit-text-stroke:0.4px #333333">set-option -g renumber-windows on # reindexes every window on close</div><div class="m" style="left:1889px;top:169px;color:#e0e0e0;-webkit-text-stroke:0.4px #333333">set-option -g history-limit 65535</div><div class="m" style="left:1889px;top:187px;color:#e0e0e0;-webkit-text-stroke:0.4px #333333"># Renumber sessions</div><div class="m" style="left:1889px;top:205px;color:#e0e0e0;-webkit-text-stroke:0.4px #333333">if-shell "[ -x ~/bin/tmux-renumber-sessions ]" {</div><div class="m" style="left:1889px;top:223px;color:#e0e0e0;-webkit-text-stroke:0.4px #333333">set-hook -g session-created "run ~/bin/tmux-renumber-sessions"</div><div class="m" style="left:1889px;top:241px;color:#e0e0e0;-webkit-text-stroke:0.4px #333333">set-hook -g session-closed  "run  ~/bin/tmux-renumber-sessions"</div><div style="left:1889px;top:42px;width:9px;height:18px;background:transparent;border:1px solid #8a9a00"></div><div class="m" style="left:2510px;top:385px;color:#e0e0e0;-webkit-text-stroke:0.4px #333333">s</div><div class="m" style="left:2510px;top:403px;color:#e0e0e0;-webkit-text-stroke:0.4px #333333">w_zoomed_flag},1}}' \</div><div class="m" style="left:2510px;top:943px;color:#e0e0e0;-webkit-text-stroke:0.4px #333333">backward `</div><div class="m" style="left:2510px;top:1087px;color:#e0e0e0;-webkit-text-stroke:0.4px #333333">M %d%b%Y"</div><div class="m" style="left:2510px;top:1231px;color:#e0e0e0;-webkit-text-stroke:0.4px #333333">roup}@#h </div><div class="m" style="left:2510px;top:1357px;color:#e0e0e0;-webkit-text-stroke:0.4px #333333"> \; delete</div><div style="left:1868px;top:2117px;width:1064px;height:18px;background:#c0c0c0;"></div><div class="m" style="left:1868px;top:2118px;color:#1a1a1a;"> -:@---  <span style="font-weight:bold;">.tmux.conf</span>     All   L1 C0      (Conf[Space]) 2025/06/21 21:51</div><div style="left:1868px;top:2136px;width:13px;height:16px;background:#f4f4f4;"></div><div style="left:1869px;top:2137px;width:11px;height:14px;background:#1a1a1a;"></div><div style="left:1870px;top:2138px;width:9px;height:12px;background:#e4e4e4;"></div><div style="left:1881px;top:2135px;width:8px;height:18px;background:#1e1e1e;"></div><div style="left:1202px;top:200px;width:982px;height:1221px;background:#262626;"></div><div style="left:1203px;top:201px;width:980px;height:1219px;background:#5c5c5c;"></div><div style="left:1206px;top:204px;width:974px;height:1213px;background:#262626;"></div><div style="left:1224px;top:200px;width:1px;height:6px;background:#262626;"></div><div style="left:1202px;top:222px;width:6px;height:1px;background:#262626;"></div><div style="left:2161px;top:200px;width:1px;height:6px;background:#262626;"></div><div style="left:2178px;top:222px;width:6px;height:1px;background:#262626;"></div><div style="left:1224px;top:1415px;width:1px;height:6px;background:#262626;"></div><div style="left:1202px;top:1398px;width:6px;height:1px;background:#262626;"></div><div style="left:2161px;top:1415px;width:1px;height:6px;background:#262626;"></div><div style="left:2178px;top:1398px;width:6px;height:1px;background:#262626;"></div><div style="left:1208px;top:206px;width:17px;height:17px;background:#4f5a69;"></div><div style="left:1215px;top:213px;width:4px;height:4px;background:transparent;border:1px solid #d0d5dc"></div><div style="left:1225px;top:206px;width:883px;height:17px;background:#4f5a69;box-shadow:inset 2px 2px 0 #6f87a8, inset 0 -2px 0 #2b3038"></div><div style="left:2108px;top:206px;width:2px;height:17px;background:#2b3038;"></div><div class="wt" style="right:1743px;top:206px">tmux@lanthan :ssh</div><div style="left:2110px;top:206px;width:68px;height:17px;background:#4f5a69;"></div><svg style="left:2114px;top:209px" width="11" height="11" viewBox="0 0 13 13"><path d="M6.5 2.5 L2.5 10.5 L10.5 10.5 Z" fill="none" stroke="#d0d5dc" stroke-width="1.3"/></svg><svg style="left:2131px;top:209px" width="11" height="11" viewBox="0 0 13 13"><rect x="2.5" y="6.5" width="8" height="3" fill="none" stroke="#d0d5dc" stroke-width="1.3"/></svg><svg style="left:2148px;top:209px" width="11" height="11" viewBox="0 0 13 13"><rect x="3.5" y="3.5" width="7" height="7" fill="none" stroke="#d0d5dc" stroke-width="1.3"/><rect x="3" y="7" width="3" height="3" fill="#d0d5dc"/></svg><svg style="left:2165px;top:209px" width="11" height="11" viewBox="0 0 13 13"><path d="M3 3 L10.5 10.5 M10.5 3 L3 10.5" stroke="#d0d5dc" stroke-width="1.2"/></svg><div style="left:1208px;top:223px;width:970px;height:1192px;background:#141414;"></div><div style="left:1208px;top:224px;width:13px;height:1190px;background:#888;background-image:repeating-conic-gradient(#d8d8d8 0 25%, #1a1a1a 0 50%);background-size:2px 2px"></div><div style="left:1222px;top:224px;width:1px;height:1190px;background:#3a3a3a;"></div><div style="left:1225px;top:225px;width:9px;height:18px;background:#555555;"></div><div style="left:1405px;top:225px;width:773px;height:18px;background:#4d4d4d;"></div><div class="m" style="left:1225px;top:226px;color:#e8e8e8;font-weight:bold">|1 cigars.org       |</div><div class="m" style="left:1225px;top:244px;color:#80d0f6;-webkit-text-stroke:0.4px #141414">* List <span style="color:#30ace6;">&lt;2025-04-13 Sun&gt;</span></div><div class="m" style="left:1225px;top:262px;color:#80d0f6;-webkit-text-stroke:0.4px #141414">| Brand                      | Model                                        | Amount | Added            |$</div><div class="m" style="left:1225px;top:280px;color:#80d0f6;-webkit-text-stroke:0.4px #141414">|----------------------------+----------------------------------------------+--------+------------------+$</div><div class="m" style="left:1225px;top:298px;color:#80d0f6;-webkit-text-stroke:0.4px #141414">| Jose L Piedra              | Cazadores                                    |      5 |                  |$</div><div class="m" style="left:1225px;top:316px;color:#80d0f6;-webkit-text-stroke:0.4px #141414">|                            | Brevas                                       |      4 |                  |$</div><div class="m" style="left:1225px;top:334px;color:#80d0f6;-webkit-text-stroke:0.4px #141414">|                            | Petit Cazadores                              |      4 |                  |$</div><div class="m" style="left:1225px;top:352px;color:#80d0f6;-webkit-text-stroke:0.4px #141414">| Romeo y Julieta</div><div class="m" style="left:1225px;top:370px;color:#80d0f6;-webkit-text-stroke:0.4px #141414">| </div><div class="m" style="left:1225px;top:388px;color:#80d0f6;-webkit-text-stroke:0.4px #141414">| </div><div class="m" style="left:1225px;top:406px;color:#80d0f6;-webkit-text-stroke:0.4px #141414">| </div><div class="m" style="left:1225px;top:424px;color:#80d0f6;-webkit-text-stroke:0.4px #141414">| </div><div class="m" style="left:1225px;top:442px;color:#80d0f6;-webkit-text-stroke:0.4px #141414">| </div><div class="m" style="left:1225px;top:460px;color:#80d0f6;-webkit-text-stroke:0.4px #141414">| Rafael Gonzalez</div><div class="m" style="left:1225px;top:478px;color:#80d0f6;-webkit-text-stroke:0.4px #141414">| </div><div class="m" style="left:1225px;top:496px;color:#80d0f6;-webkit-text-stroke:0.4px #141414">| Montecristo</div><div class="m" style="left:1225px;top:514px;color:#80d0f6;-webkit-text-stroke:0.4px #141414">| Ramon Allones</div><div class="m" style="left:1225px;top:532px;color:#80d0f6;-webkit-text-stroke:0.4px #141414">| </div><div class="m" style="left:1225px;top:550px;color:#80d0f6;-webkit-text-stroke:0.4px #141414">| La Gloria Cubana</div><div class="m" style="left:1225px;top:568px;color:#80d0f6;-webkit-text-stroke:0.4px #141414">| H Upmann</div><div class="m" style="left:1225px;top:586px;color:#80d0f6;-webkit-text-stroke:0.4px #141414">| San Cristobal</div><div class="m" style="left:1225px;top:604px;color:#80d0f6;-webkit-text-stroke:0.4px #141414">| Quintero</div><div class="m" style="left:1225px;top:622px;color:#80d0f6;-webkit-text-stroke:0.4px #141414">| </div><div class="m" style="left:1225px;top:640px;color:#80d0f6;-webkit-text-stroke:0.4px #141414">| </div><div class="m" style="left:1225px;top:658px;color:#80d0f6;-webkit-text-stroke:0.4px #141414">| </div><div class="m" style="left:1225px;top:676px;color:#80d0f6;-webkit-text-stroke:0.4px #141414">| Por Larranaga</div><div class="m" style="left:1225px;top:694px;color:#80d0f6;-webkit-text-stroke:0.4px #141414">| Partagas</div><div class="m" style="left:1225px;top:712px;color:#80d0f6;-webkit-text-stroke:0.4px #141414">| </div><div class="m" style="left:1225px;top:730px;color:#80d0f6;-webkit-text-stroke:0.4px #141414">| </div><div class="m" style="left:1225px;top:748px;color:#80d0f6;-webkit-text-stroke:0.4px #141414">| </div><div class="m" style="left:1225px;top:766px;color:#80d0f6;-webkit-text-stroke:0.4px #141414">| Cohiba</div><div class="m" style="left:1225px;top:784px;color:#80d0f6;-webkit-text-stroke:0.4px #141414">| </div><div class="m" style="left:1225px;top:802px;color:#80d0f6;-webkit-text-stroke:0.4px #141414">| </div><div class="m" style="left:1225px;top:820px;color:#80d0f6;-webkit-text-stroke:0.4px #141414">| </div><div class="m" style="left:1225px;top:838px;color:#80d0f6;-webkit-text-stroke:0.4px #141414">| </div><div class="m" style="left:1225px;top:856px;color:#80d0f6;-webkit-text-stroke:0.4px #141414">| Davidoff</div><div class="m" style="left:1225px;top:874px;color:#80d0f6;-webkit-text-stroke:0.4px #141414">| </div><div class="m" style="left:1225px;top:892px;color:#80d0f6;-webkit-text-stroke:0.4px #141414">| </div><div class="m" style="left:1225px;top:910px;color:#80d0f6;-webkit-text-stroke:0.4px #141414">| </div><div class="m" style="left:1225px;top:928px;color:#80d0f6;-webkit-text-stroke:0.4px #141414">| Plasencia</div><div class="m" style="left:1225px;top:946px;color:#80d0f6;-webkit-text-stroke:0.4px #141414">| Avo</div><div class="m" style="left:1225px;top:964px;color:#80d0f6;-webkit-text-stroke:0.4px #141414">| </div><div class="m" style="left:1225px;top:982px;color:#80d0f6;-webkit-text-stroke:0.4px #141414">| </div><div class="m" style="left:1225px;top:1000px;color:#80d0f6;-webkit-text-stroke:0.4px #141414">| </div><div class="m" style="left:1225px;top:1018px;color:#80d0f6;-webkit-text-stroke:0.4px #141414">| Camacho</div><div class="m" style="left:1225px;top:1036px;color:#80d0f6;-webkit-text-stroke:0.4px #141414">| Balmoral</div><div class="m" style="left:1225px;top:1054px;color:#80d0f6;-webkit-text-stroke:0.4px #141414">| Cusano</div><div class="m" style="left:1225px;top:1072px;color:#80d0f6;-webkit-text-stroke:0.4px #141414">| Davidoff</div><div class="m" style="left:1225px;top:1090px;color:#80d0f6;-webkit-text-stroke:0.4px #141414">| </div><div class="m" style="left:1225px;top:1108px;color:#80d0f6;-webkit-text-stroke:0.4px #141414">| </div><div class="m" style="left:1225px;top:1126px;color:#80d0f6;-webkit-text-stroke:0.4px #141414">| </div><div class="m" style="left:1225px;top:1144px;color:#80d0f6;-webkit-text-stroke:0.4px #141414">| </div><div class="m" style="left:1225px;top:1162px;color:#80d0f6;-webkit-text-stroke:0.4px #141414">| </div><div class="m" style="left:1225px;top:1180px;color:#80d0f6;-webkit-text-stroke:0.4px #141414">| </div><div class="m" style="left:1225px;top:1198px;color:#80d0f6;-webkit-text-stroke:0.4px #141414">| </div><div class="m" style="left:1225px;top:1216px;color:#80d0f6;-webkit-text-stroke:0.4px #141414">| </div><div class="m" style="left:1225px;top:1234px;color:#80d0f6;-webkit-text-stroke:0.4px #141414">| </div><div class="m" style="left:1225px;top:1252px;color:#80d0f6;-webkit-text-stroke:0.4px #141414">| </div><div class="m" style="left:1225px;top:1270px;color:#80d0f6;-webkit-text-stroke:0.4px #141414">| </div><div class="m" style="left:1225px;top:1288px;color:#80d0f6;-webkit-text-stroke:0.4px #141414">| </div><div class="m" style="left:1225px;top:1306px;color:#80d0f6;-webkit-text-stroke:0.4px #141414">| </div><div class="m" style="left:1225px;top:1324px;color:#80d0f6;-webkit-text-stroke:0.4px #141414">| </div><div style="left:1225px;top:1323px;width:9px;height:18px;background:transparent;border:1px solid #8a9a00"></div><div style="left:1225px;top:1341px;width:953px;height:18px;background:#c0c0c0;"></div><div class="m" style="left:1225px;top:1342px;color:#1a1a1a;">-UU-:----F1  cigars.org     Top L1     (Org) </div><div style="left:1225px;top:1377px;width:36px;height:18px;background:#879a00;"></div><div class="m" style="left:1225px;top:1378px;color:#1a1a1a;">[0] <span style="color:#a8b800;">*1</span></div><div style="left:1225px;top:1395px;width:36px;height:18px;background:#333333;"></div><div class="m" style="left:1225px;top:1396px;color:#d8d8d8;">[6] *1</div><div style="left:3090px;top:0px;width:748px;height:28px;background:#262626;"></div><div style="left:3091px;top:1px;width:746px;height:26px;background:#5c5c5c;"></div><div style="left:3094px;top:4px;width:740px;height:20px;background:#262626;"></div><div style="left:3112px;top:0px;width:1px;height:6px;background:#262626;"></div><div style="left:3090px;top:22px;width:6px;height:1px;background:#262626;"></div><div style="left:3815px;top:0px;width:1px;height:6px;background:#262626;"></div><div style="left:3832px;top:22px;width:6px;height:1px;background:#262626;"></div><div style="left:3112px;top:22px;width:1px;height:6px;background:#262626;"></div><div style="left:3090px;top:5px;width:6px;height:1px;background:#262626;"></div><div style="left:3815px;top:22px;width:1px;height:6px;background:#262626;"></div><div style="left:3832px;top:5px;width:6px;height:1px;background:#262626;"></div><div style="left:3096px;top:6px;width:17px;height:17px;background:#4f5a69;"></div><div style="left:3103px;top:13px;width:4px;height:4px;background:transparent;border:1px solid #d0d5dc"></div><div style="left:3113px;top:6px;width:649px;height:17px;background:#4f5a69;box-shadow:inset 2px 2px 0 #6f87a8, inset 0 -2px 0 #2b3038"></div><div style="left:3762px;top:6px;width:2px;height:17px;background:#2b3038;"></div><div style="left:3115px;top:9px;width:645px;height:1px;background:#8aa0bd;"></div><div style="left:3115px;top:11px;width:645px;height:1px;background:#3a4452;"></div><div style="left:3115px;top:13px;width:645px;height:1px;background:#8aa0bd;"></div><div style="left:3115px;top:15px;width:645px;height:1px;background:#3a4452;"></div><div style="left:3115px;top:17px;width:645px;height:1px;background:#8aa0bd;"></div><div style="left:3573px;top:8px;width:185px;height:13px;background:#4f5a69;"></div><div class="wt" style="right:85px;top:6px">music@lanthan - ~ cmus [80x23]</div><div style="left:3764px;top:6px;width:68px;height:17px;background:#4f5a69;"></div><svg style="left:3768px;top:9px" width="11" height="11" viewBox="0 0 13 13"><path d="M2.5 3 L10.5 3 L6.5 11 Z" fill="none" stroke="#d0d5dc" stroke-width="1.3"/></svg><svg style="left:3785px;top:9px" width="11" height="11" viewBox="0 0 13 13"><rect x="2.5" y="6.5" width="8" height="3" fill="none" stroke="#d0d5dc" stroke-width="1.3"/></svg><svg style="left:3802px;top:9px" width="11" height="11" viewBox="0 0 13 13"><rect x="3.5" y="3.5" width="7" height="7" fill="none" stroke="#d0d5dc" stroke-width="1.3"/><rect x="3" y="7" width="3" height="3" fill="#d0d5dc"/></svg><svg style="left:3819px;top:9px" width="11" height="11" viewBox="0 0 13 13"><path d="M3 3 L10.5 10.5 M10.5 3 L3 10.5" stroke="#d0d5dc" stroke-width="1.2"/></svg><div style="left:3527px;top:1907px;width:311px;height:250px;background:#262626;"></div><div style="left:3528px;top:1908px;width:309px;height:248px;background:#f0f0f0;"></div><div style="left:3531px;top:1911px;width:303px;height:242px;background:#5a5a5a;"></div><div style="left:3533px;top:1913px;width:299px;height:239px;background:#2e3848;"></div><div style="left:3673px;top:1913px;width:59px;height:79px;background:#4e5a6a;"></div><div style="left:3632px;top:1913px;width:1px;height:239px;background:#e8e8e8;"></div><div style="left:3732px;top:1913px;width:1px;height:239px;background:#e8e8e8;"></div><div style="left:3533px;top:1992px;width:299px;height:1px;background:#e8e8e8;"></div><div style="left:3533px;top:2072px;width:299px;height:1px;background:#e8e8e8;"></div><div style="left:3633px;top:1913px;width:40px;height:77px;background:#2e3848;border:1px solid #111"></div><div style="left:3635px;top:1914px;font-family:'Liberation Mono',monospace;font-size:8px;line-height:10px;color:#e8e8e8;white-space:pre">deskto
.ps
—
Mozil
a
Firefo
x</div><div style="left:3680px;top:1913px;width:27px;height:79px;background:#2e3848;border:1px solid #111"></div><div style="left:3682px;top:1914px;font-family:'Liberation Mono',monospace;font-size:8px;line-height:10px;color:#e8e8e8;white-space:pre">emac
.i
.@
n
n
:
.
tmu</div><div style="left:3666px;top:1925px;width:31px;height:61px;background:#f05a40;border:1px solid #111"></div><div style="left:3668px;top:1926px;font-family:'Liberation Mono',monospace;font-size:8px;line-height:10px;color:#fff;white-space:pre">emac
s@la
ntha
n.cu
co:
*scr</div><div style="left:3699px;top:1940px;width:25px;height:44px;background:#2e3848;border:1px solid #111"></div><div style="left:3701px;top:1941px;font-family:'Liberation Mono',monospace;font-size:8px;line-height:10px;color:#e8e8e8;white-space:pre">git
@tm
ux
:zs</div><div style="left:2594px;top:753px;width:975px;height:1218px;background:#262626;"></div><div style="left:2595px;top:754px;width:973px;height:1216px;background:#5c5c5c;"></div><div style="left:2598px;top:757px;width:967px;height:1210px;background:#262626;"></div><div style="left:2616px;top:753px;width:1px;height:6px;background:#262626;"></div><div style="left:2594px;top:775px;width:6px;height:1px;background:#262626;"></div><div style="left:3546px;top:753px;width:1px;height:6px;background:#262626;"></div><div style="left:3563px;top:775px;width:6px;height:1px;background:#262626;"></div><div style="left:2616px;top:1965px;width:1px;height:6px;background:#262626;"></div><div style="left:2594px;top:1948px;width:6px;height:1px;background:#262626;"></div><div style="left:3546px;top:1965px;width:1px;height:6px;background:#262626;"></div><div style="left:3563px;top:1948px;width:6px;height:1px;background:#262626;"></div><div style="left:2600px;top:759px;width:17px;height:17px;background:#4f5a69;"></div><div style="left:2607px;top:766px;width:4px;height:4px;background:transparent;border:1px solid #d0d5dc"></div><div style="left:2617px;top:759px;width:876px;height:17px;background:#4f5a69;box-shadow:inset 2px 2px 0 #6f87a8, inset 0 -2px 0 #2b3038"></div><div style="left:3493px;top:759px;width:2px;height:17px;background:#2b3038;"></div><div class="wt" style="right:354px;top:759px">git@tmux :zsh ~/git/dotfiles [100x29]</div><div style="left:3495px;top:759px;width:68px;height:17px;background:#4f5a69;"></div><svg style="left:3499px;top:762px" width="11" height="11" viewBox="0 0 13 13"><path d="M6.5 2.5 L2.5 10.5 L10.5 10.5 Z" fill="none" stroke="#d0d5dc" stroke-width="1.3"/></svg><svg style="left:3516px;top:762px" width="11" height="11" viewBox="0 0 13 13"><rect x="2.5" y="6.5" width="8" height="3" fill="none" stroke="#d0d5dc" stroke-width="1.3"/></svg><svg style="left:3533px;top:762px" width="11" height="11" viewBox="0 0 13 13"><rect x="3.5" y="3.5" width="7" height="7" fill="none" stroke="#d0d5dc" stroke-width="1.3"/><rect x="3" y="7" width="3" height="3" fill="#d0d5dc"/></svg><svg style="left:3550px;top:762px" width="11" height="11" viewBox="0 0 13 13"><path d="M3 3 L10.5 10.5 M10.5 3 L3 10.5" stroke="#d0d5dc" stroke-width="1.2"/></svg><div style="left:2600px;top:776px;width:963px;height:1189px;background:#141414;"></div><div style="left:2612px;top:776px;width:1px;height:1171px;background:#3c3c3c;"></div><div style="left:2600px;top:1484px;width:12px;height:481px;background:#888;background-image:repeating-conic-gradient(#d8d8d8 0 25%, #1a1a1a 0 50%);background-size:2px 2px"></div><div class="m" style="left:2616px;top:778px;color:#dcdcdc;-webkit-text-stroke:0.4px #141414">lanthan ~/git/dotfiles@<span style="color:#a8b800;">master</span>(<span style="color:#e03030;">U</span>)% git status
On branch master
Your branch is up to date with 'origin/master'.

Changes not staged for commit:
  (use "git add &lt;file&gt;..." to update what will be committed)
  (use "git restore &lt;file&gt;..." to discard changes in working directory)
        <span style="color:#e03030;">modified:   conky/conkyrc.obsd</span>
        <span style="color:#e03030;">modified:   home/emacs</span>

no changes added to commit (use "git add" and/or "git commit -a")
lanthan ~/git/dotfiles@<span style="color:#a8b800;">master</span>(<span style="color:#e03030;">U</span>)% </div><div style="left:2922px;top:975px;width:9px;height:18px;background:transparent;border:1px solid #a8b800"></div><div style="left:2616px;top:1947px;width:944px;height:18px;background:#333333;"></div><div style="left:2688px;top:1947px;width:54px;height:18px;background:#141414;"></div><div class="m" style="left:2616px;top:1948px;color:#d8d8d8;">[git-3] *1 zsh</div><div class="m" style="left:3299px;top:1948px;color:#d8d8d8;">[git@lanthan] 21:51 21Jun2025</div><div style="left:1286px;top:346px;width:1224px;height:1685px;background:#262626;"></div><div style="left:1287px;top:347px;width:1222px;height:1683px;background:#f2f2f2;"></div><div style="left:1290px;top:350px;width:1216px;height:1677px;background:#5a5a5a;"></div><div style="left:1291px;top:351px;width:1214px;height:1675px;background:#1e1e1e;"></div><div style="left:1308px;top:346px;width:1px;height:6px;background:#262626;"></div><div style="left:1286px;top:368px;width:6px;height:1px;background:#262626;"></div><div style="left:2487px;top:346px;width:1px;height:6px;background:#262626;"></div><div style="left:2504px;top:368px;width:6px;height:1px;background:#262626;"></div><div style="left:1308px;top:2025px;width:1px;height:6px;background:#262626;"></div><div style="left:1286px;top:2008px;width:6px;height:1px;background:#262626;"></div><div style="left:2487px;top:2025px;width:1px;height:6px;background:#262626;"></div><div style="left:2504px;top:2008px;width:6px;height:1px;background:#262626;"></div><div style="left:1292px;top:352px;width:17px;height:17px;background:#2d3847;"></div><div style="left:1294px;top:354px;width:13px;height:13px;background:transparent;border:2px solid #f4f4f4"></div><div style="left:1299px;top:359px;width:4px;height:4px;background:transparent;border:1px solid #f4f4f4"></div><div style="left:1309px;top:352px;width:1125px;height:17px;background:#2d3847;box-shadow:inset 2px 2px 0 #3f5a80, inset 0 -2px 0 #1b2028"></div><div style="left:2434px;top:352px;width:2px;height:17px;background:#1b2028;"></div><div class="wt" style="right:1414px;top:352px">emacs@lanthan.cuco: *scratch*</div><div style="left:2436px;top:352px;width:68px;height:17px;background:#2d3847;"></div><div style="left:2439px;top:354px;width:13px;height:13px;background:transparent;border:2px solid #f4f4f4"></div><svg style="left:2441px;top:356px" width="9" height="9" viewBox="0 0 13 13"><path d="M6.5 2.5 L2.5 10.5 L10.5 10.5 Z" fill="none" stroke="#f4f4f4" stroke-width="1.3"/></svg><div style="left:2456px;top:354px;width:13px;height:13px;background:transparent;border:2px solid #f4f4f4"></div><svg style="left:2458px;top:356px" width="9" height="9" viewBox="0 0 13 13"><rect x="2.5" y="6.5" width="8" height="3" fill="none" stroke="#f4f4f4" stroke-width="1.3"/></svg><div style="left:2473px;top:354px;width:13px;height:13px;background:transparent;border:2px solid #f4f4f4"></div><svg style="left:2475px;top:356px" width="9" height="9" viewBox="0 0 13 13"><rect x="3.5" y="3.5" width="7" height="7" fill="none" stroke="#f4f4f4" stroke-width="1.3"/><rect x="3" y="7" width="3" height="3" fill="#f4f4f4"/></svg><div style="left:2490px;top:354px;width:13px;height:13px;background:transparent;border:2px solid #f4f4f4"></div><svg style="left:2492px;top:356px" width="9" height="9" viewBox="0 0 13 13"><path d="M3 3 L10.5 10.5 M10.5 3 L3 10.5" stroke="#f4f4f4" stroke-width="1.2"/></svg><div style="left:1292px;top:369px;width:1212px;height:1657px;background:#2e3440;"></div><div style="left:1293px;top:369px;width:9px;height:18px;background:#4d4d4d;"></div><div style="left:1562px;top:369px;width:942px;height:18px;background:#4d4d4d;"></div><div class="m" style="left:1302px;top:370px;color:#f0f0f0;font-weight:bold">1 *scratch*</div><div style="left:1293px;top:388px;width:13px;height:1600px;background:#f4f4f4;"></div><div style="left:1294px;top:389px;width:11px;height:1598px;background:#1a1a1a;"></div><div style="left:1295px;top:390px;width:9px;height:1596px;background:#e4e4e4;"></div><div style="left:1306px;top:388px;width:8px;height:1600px;background:#1c1c1c;"></div><div style="left:2496px;top:388px;width:8px;height:1600px;background:#1c1c1c;"></div><div class="m" style="left:1314px;top:389px;color:#e6e6e6;-webkit-text-stroke:0.4px #2e3440">;; Unfortunately, there’s a radio connected to my brain</div><div class="m" style="left:1314px;top:407px;color:#e6e6e6;-webkit-text-stroke:0.4px #2e3440">;; Actually, it’s the BBC controlling us from London.</div><div style="left:1314px;top:442px;width:9px;height:18px;background:#8a9a00;"></div><div style="left:1292px;top:1988px;width:1212px;height:18px;background:#c0c0c0;"></div><div class="m" style="left:1294px;top:1989px;color:#1a1a1a;"> U:---  <span style="font-weight:bold;">*scratch*</span>      All   L4 C0      (Lisp Interaction) 2025/06/21 21:51</div><div style="left:1293px;top:2007px;width:13px;height:17px;background:#f4f4f4;"></div><div style="left:1294px;top:2008px;width:11px;height:15px;background:#1a1a1a;"></div><div style="left:1295px;top:2009px;width:9px;height:13px;background:#e4e4e4;"></div><div style="left:1306px;top:2006px;width:8px;height:20px;background:#1c1c1c;"></div></body></html>
